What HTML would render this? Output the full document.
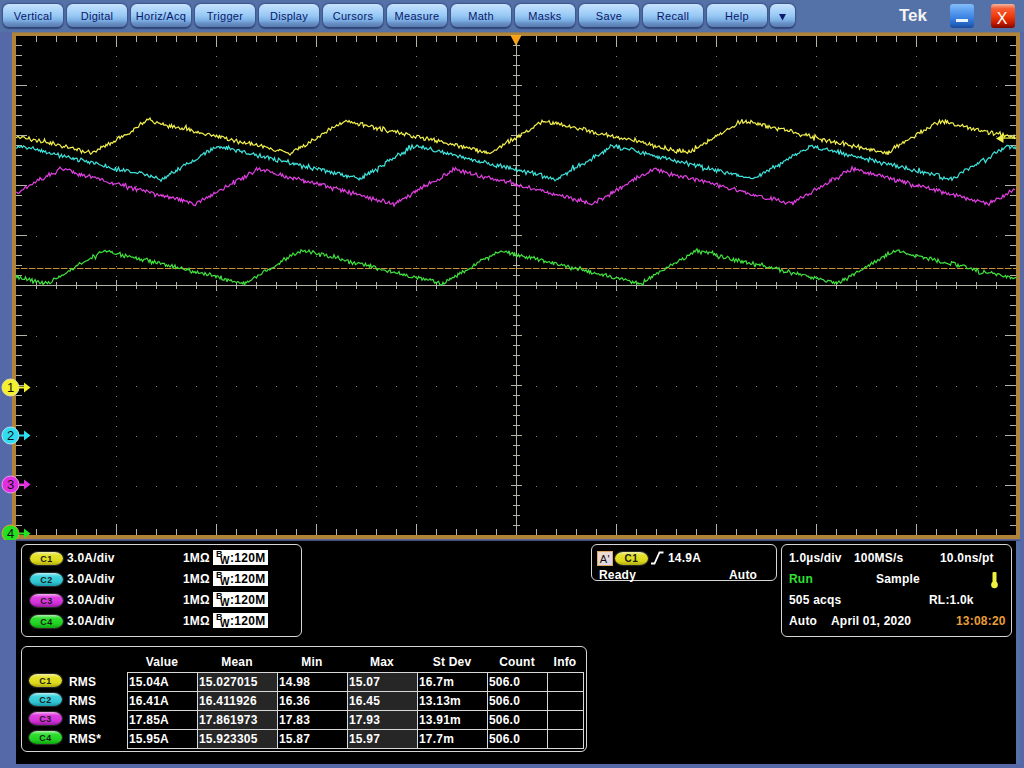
<!DOCTYPE html>
<html><head><meta charset="utf-8">
<style>
*{margin:0;padding:0;box-sizing:border-box}
html,body{width:1024px;height:768px;overflow:hidden}
body{background:#5472a8;position:relative;font-family:"Liberation Sans",sans-serif;color:#fff}
.a{position:absolute}
.btn{position:absolute;top:4px;height:23px;width:60px;border-radius:6px;
 background:linear-gradient(#c9e2fd 0%,#b4d8fb 20%,#98c9f5 50%,#7eb2e6 70%,#6890c6 84%,#5a7aac 100%);
 box-shadow:0 0 1.5px 0.5px rgba(40,60,110,.55),0 2px 1px rgba(45,65,115,.8);
 color:#0a186a;font-size:11px;letter-spacing:0.3px;text-align:center;line-height:25px}
.tek{left:899px;top:6px;font-size:17px;font-weight:bold;color:#f4f4f4}
.win{position:absolute;top:4px;width:24px;height:24px;border-radius:3px}
.frame{left:12px;top:32px;width:1008px;height:507px;background:#b08438;border-top:1px solid #8e7a62}
.scr{left:16px;top:36px;width:1000px;height:499px;background:#000}
.panel{left:16px;top:541px;width:1000px;height:223px;background:#000}
.box{position:absolute;border:1.5px solid #d6d6d6;border-radius:6px}
.t{position:absolute;font-size:12px;font-weight:bold;white-space:nowrap;line-height:14px;padding-top:1px;letter-spacing:0.2px}
.pill{position:absolute;width:33px;height:13px;border-radius:8px/6.5px;color:#1a1a1a;font-size:9px;text-align:center;line-height:14px;font-weight:bold;letter-spacing:0.5px;box-shadow:0 0 1px 1px rgba(90,90,90,.5)}
.p1{background:linear-gradient(#f0eea8 0%,#e4e22a 25%,#dcd81c 70%,#b0aa10 100%)}
.p2{background:linear-gradient(#b8eef4 0%,#40d4e0 25%,#30c4d2 70%,#1898a8 100%)}
.p3{background:linear-gradient(#f0b0f0 0%,#e040e0 25%,#d030d8 70%,#9818a0 100%)}
.p4{background:linear-gradient(#b0f0b0 0%,#30e030 25%,#20d020 70%,#10a010 100%)}
.bw{position:absolute;left:213px;width:55px;height:15px;background:#fff;color:#000;font-size:12px;font-weight:bold;line-height:15px}
.cm{position:absolute;left:2px;width:17px;height:17px;border-radius:50%;color:#111;font-size:13px;text-align:center;line-height:17px}
</style></head><body>
<div class="btn" style="left:3px">Vertical</div>
<div class="btn" style="left:67px">Digital</div>
<div class="btn" style="left:131px">Horiz/Acq</div>
<div class="btn" style="left:195px">Trigger</div>
<div class="btn" style="left:259px">Display</div>
<div class="btn" style="left:323px">Cursors</div>
<div class="btn" style="left:387px">Measure</div>
<div class="btn" style="left:451px">Math</div>
<div class="btn" style="left:515px">Masks</div>
<div class="btn" style="left:579px">Save</div>
<div class="btn" style="left:643px">Recall</div>
<div class="btn" style="left:707px">Help</div>
<div class="btn" style="left:770px;width:25px"><svg width="25" height="21" style="position:absolute;left:0;top:0"><path d="M9 10h7l-3.5 6.5z" fill="#0c1a70"/></svg></div>
<div class="a tek">Tek</div>
<div class="win" style="left:950px;background:linear-gradient(#84bcfa 0%,#5a9ef0 30%,#3a80e0 60%,#2262c2 85%,#1a4a9a 100%)"><div class="a" style="left:5.5px;top:15px;width:12px;height:2.5px;background:#eaf4ff"></div></div>
<div class="win" style="left:991px;background:linear-gradient(#f4b8a4 0%,#f86038 18%,#f23c0a 50%,#c41a00 80%,#7a0800 100%)"><div class="a" style="left:-1px;top:5px;width:24px;text-align:center;font-size:16px;color:#fff;line-height:19px">X</div></div>

<div class="a" style="left:0;top:32px;width:16px;height:736px;background:#5568a8"></div>
<div class="a" style="left:1020px;top:32px;width:4px;height:736px;background:#5568a8"></div>
<div class="a" style="left:0;top:764px;width:1024px;height:4px;background:#5568a8"></div>
<div class="a frame"></div>
<div class="a scr"></div>
<svg class="a" style="left:0;top:0" width="1024" height="540" viewBox="0 0 1024 540">
<path fill="#84847a" d="M116 46h1v1h-1zM116 56h1v1h-1zM116 66h1v1h-1zM116 76h1v1h-1zM116 86h1v1h-1zM116 96h1v1h-1zM116 106h1v1h-1zM116 116h1v1h-1zM116 126h1v1h-1zM116 136h1v1h-1zM116 146h1v1h-1zM116 156h1v1h-1zM116 166h1v1h-1zM116 176h1v1h-1zM116 186h1v1h-1zM116 196h1v1h-1zM116 206h1v1h-1zM116 216h1v1h-1zM116 226h1v1h-1zM116 236h1v1h-1zM116 246h1v1h-1zM116 256h1v1h-1zM116 266h1v1h-1zM116 276h1v1h-1zM116 286h1v1h-1zM116 296h1v1h-1zM116 306h1v1h-1zM116 316h1v1h-1zM116 326h1v1h-1zM116 336h1v1h-1zM116 346h1v1h-1zM116 356h1v1h-1zM116 366h1v1h-1zM116 376h1v1h-1zM116 386h1v1h-1zM116 396h1v1h-1zM116 406h1v1h-1zM116 416h1v1h-1zM116 426h1v1h-1zM116 436h1v1h-1zM116 446h1v1h-1zM116 456h1v1h-1zM116 466h1v1h-1zM116 476h1v1h-1zM116 486h1v1h-1zM116 496h1v1h-1zM116 506h1v1h-1zM116 516h1v1h-1zM116 526h1v1h-1zM216 46h1v1h-1zM216 56h1v1h-1zM216 66h1v1h-1zM216 76h1v1h-1zM216 86h1v1h-1zM216 96h1v1h-1zM216 106h1v1h-1zM216 116h1v1h-1zM216 126h1v1h-1zM216 136h1v1h-1zM216 146h1v1h-1zM216 156h1v1h-1zM216 166h1v1h-1zM216 176h1v1h-1zM216 186h1v1h-1zM216 196h1v1h-1zM216 206h1v1h-1zM216 216h1v1h-1zM216 226h1v1h-1zM216 236h1v1h-1zM216 246h1v1h-1zM216 256h1v1h-1zM216 266h1v1h-1zM216 276h1v1h-1zM216 286h1v1h-1zM216 296h1v1h-1zM216 306h1v1h-1zM216 316h1v1h-1zM216 326h1v1h-1zM216 336h1v1h-1zM216 346h1v1h-1zM216 356h1v1h-1zM216 366h1v1h-1zM216 376h1v1h-1zM216 386h1v1h-1zM216 396h1v1h-1zM216 406h1v1h-1zM216 416h1v1h-1zM216 426h1v1h-1zM216 436h1v1h-1zM216 446h1v1h-1zM216 456h1v1h-1zM216 466h1v1h-1zM216 476h1v1h-1zM216 486h1v1h-1zM216 496h1v1h-1zM216 506h1v1h-1zM216 516h1v1h-1zM216 526h1v1h-1zM316 46h1v1h-1zM316 56h1v1h-1zM316 66h1v1h-1zM316 76h1v1h-1zM316 86h1v1h-1zM316 96h1v1h-1zM316 106h1v1h-1zM316 116h1v1h-1zM316 126h1v1h-1zM316 136h1v1h-1zM316 146h1v1h-1zM316 156h1v1h-1zM316 166h1v1h-1zM316 176h1v1h-1zM316 186h1v1h-1zM316 196h1v1h-1zM316 206h1v1h-1zM316 216h1v1h-1zM316 226h1v1h-1zM316 236h1v1h-1zM316 246h1v1h-1zM316 256h1v1h-1zM316 266h1v1h-1zM316 276h1v1h-1zM316 286h1v1h-1zM316 296h1v1h-1zM316 306h1v1h-1zM316 316h1v1h-1zM316 326h1v1h-1zM316 336h1v1h-1zM316 346h1v1h-1zM316 356h1v1h-1zM316 366h1v1h-1zM316 376h1v1h-1zM316 386h1v1h-1zM316 396h1v1h-1zM316 406h1v1h-1zM316 416h1v1h-1zM316 426h1v1h-1zM316 436h1v1h-1zM316 446h1v1h-1zM316 456h1v1h-1zM316 466h1v1h-1zM316 476h1v1h-1zM316 486h1v1h-1zM316 496h1v1h-1zM316 506h1v1h-1zM316 516h1v1h-1zM316 526h1v1h-1zM416 46h1v1h-1zM416 56h1v1h-1zM416 66h1v1h-1zM416 76h1v1h-1zM416 86h1v1h-1zM416 96h1v1h-1zM416 106h1v1h-1zM416 116h1v1h-1zM416 126h1v1h-1zM416 136h1v1h-1zM416 146h1v1h-1zM416 156h1v1h-1zM416 166h1v1h-1zM416 176h1v1h-1zM416 186h1v1h-1zM416 196h1v1h-1zM416 206h1v1h-1zM416 216h1v1h-1zM416 226h1v1h-1zM416 236h1v1h-1zM416 246h1v1h-1zM416 256h1v1h-1zM416 266h1v1h-1zM416 276h1v1h-1zM416 286h1v1h-1zM416 296h1v1h-1zM416 306h1v1h-1zM416 316h1v1h-1zM416 326h1v1h-1zM416 336h1v1h-1zM416 346h1v1h-1zM416 356h1v1h-1zM416 366h1v1h-1zM416 376h1v1h-1zM416 386h1v1h-1zM416 396h1v1h-1zM416 406h1v1h-1zM416 416h1v1h-1zM416 426h1v1h-1zM416 436h1v1h-1zM416 446h1v1h-1zM416 456h1v1h-1zM416 466h1v1h-1zM416 476h1v1h-1zM416 486h1v1h-1zM416 496h1v1h-1zM416 506h1v1h-1zM416 516h1v1h-1zM416 526h1v1h-1zM516 46h1v1h-1zM516 56h1v1h-1zM516 66h1v1h-1zM516 76h1v1h-1zM516 86h1v1h-1zM516 96h1v1h-1zM516 106h1v1h-1zM516 116h1v1h-1zM516 126h1v1h-1zM516 136h1v1h-1zM516 146h1v1h-1zM516 156h1v1h-1zM516 166h1v1h-1zM516 176h1v1h-1zM516 186h1v1h-1zM516 196h1v1h-1zM516 206h1v1h-1zM516 216h1v1h-1zM516 226h1v1h-1zM516 236h1v1h-1zM516 246h1v1h-1zM516 256h1v1h-1zM516 266h1v1h-1zM516 276h1v1h-1zM516 286h1v1h-1zM516 296h1v1h-1zM516 306h1v1h-1zM516 316h1v1h-1zM516 326h1v1h-1zM516 336h1v1h-1zM516 346h1v1h-1zM516 356h1v1h-1zM516 366h1v1h-1zM516 376h1v1h-1zM516 386h1v1h-1zM516 396h1v1h-1zM516 406h1v1h-1zM516 416h1v1h-1zM516 426h1v1h-1zM516 436h1v1h-1zM516 446h1v1h-1zM516 456h1v1h-1zM516 466h1v1h-1zM516 476h1v1h-1zM516 486h1v1h-1zM516 496h1v1h-1zM516 506h1v1h-1zM516 516h1v1h-1zM516 526h1v1h-1zM616 46h1v1h-1zM616 56h1v1h-1zM616 66h1v1h-1zM616 76h1v1h-1zM616 86h1v1h-1zM616 96h1v1h-1zM616 106h1v1h-1zM616 116h1v1h-1zM616 126h1v1h-1zM616 136h1v1h-1zM616 146h1v1h-1zM616 156h1v1h-1zM616 166h1v1h-1zM616 176h1v1h-1zM616 186h1v1h-1zM616 196h1v1h-1zM616 206h1v1h-1zM616 216h1v1h-1zM616 226h1v1h-1zM616 236h1v1h-1zM616 246h1v1h-1zM616 256h1v1h-1zM616 266h1v1h-1zM616 276h1v1h-1zM616 286h1v1h-1zM616 296h1v1h-1zM616 306h1v1h-1zM616 316h1v1h-1zM616 326h1v1h-1zM616 336h1v1h-1zM616 346h1v1h-1zM616 356h1v1h-1zM616 366h1v1h-1zM616 376h1v1h-1zM616 386h1v1h-1zM616 396h1v1h-1zM616 406h1v1h-1zM616 416h1v1h-1zM616 426h1v1h-1zM616 436h1v1h-1zM616 446h1v1h-1zM616 456h1v1h-1zM616 466h1v1h-1zM616 476h1v1h-1zM616 486h1v1h-1zM616 496h1v1h-1zM616 506h1v1h-1zM616 516h1v1h-1zM616 526h1v1h-1zM716 46h1v1h-1zM716 56h1v1h-1zM716 66h1v1h-1zM716 76h1v1h-1zM716 86h1v1h-1zM716 96h1v1h-1zM716 106h1v1h-1zM716 116h1v1h-1zM716 126h1v1h-1zM716 136h1v1h-1zM716 146h1v1h-1zM716 156h1v1h-1zM716 166h1v1h-1zM716 176h1v1h-1zM716 186h1v1h-1zM716 196h1v1h-1zM716 206h1v1h-1zM716 216h1v1h-1zM716 226h1v1h-1zM716 236h1v1h-1zM716 246h1v1h-1zM716 256h1v1h-1zM716 266h1v1h-1zM716 276h1v1h-1zM716 286h1v1h-1zM716 296h1v1h-1zM716 306h1v1h-1zM716 316h1v1h-1zM716 326h1v1h-1zM716 336h1v1h-1zM716 346h1v1h-1zM716 356h1v1h-1zM716 366h1v1h-1zM716 376h1v1h-1zM716 386h1v1h-1zM716 396h1v1h-1zM716 406h1v1h-1zM716 416h1v1h-1zM716 426h1v1h-1zM716 436h1v1h-1zM716 446h1v1h-1zM716 456h1v1h-1zM716 466h1v1h-1zM716 476h1v1h-1zM716 486h1v1h-1zM716 496h1v1h-1zM716 506h1v1h-1zM716 516h1v1h-1zM716 526h1v1h-1zM816 46h1v1h-1zM816 56h1v1h-1zM816 66h1v1h-1zM816 76h1v1h-1zM816 86h1v1h-1zM816 96h1v1h-1zM816 106h1v1h-1zM816 116h1v1h-1zM816 126h1v1h-1zM816 136h1v1h-1zM816 146h1v1h-1zM816 156h1v1h-1zM816 166h1v1h-1zM816 176h1v1h-1zM816 186h1v1h-1zM816 196h1v1h-1zM816 206h1v1h-1zM816 216h1v1h-1zM816 226h1v1h-1zM816 236h1v1h-1zM816 246h1v1h-1zM816 256h1v1h-1zM816 266h1v1h-1zM816 276h1v1h-1zM816 286h1v1h-1zM816 296h1v1h-1zM816 306h1v1h-1zM816 316h1v1h-1zM816 326h1v1h-1zM816 336h1v1h-1zM816 346h1v1h-1zM816 356h1v1h-1zM816 366h1v1h-1zM816 376h1v1h-1zM816 386h1v1h-1zM816 396h1v1h-1zM816 406h1v1h-1zM816 416h1v1h-1zM816 426h1v1h-1zM816 436h1v1h-1zM816 446h1v1h-1zM816 456h1v1h-1zM816 466h1v1h-1zM816 476h1v1h-1zM816 486h1v1h-1zM816 496h1v1h-1zM816 506h1v1h-1zM816 516h1v1h-1zM816 526h1v1h-1zM916 46h1v1h-1zM916 56h1v1h-1zM916 66h1v1h-1zM916 76h1v1h-1zM916 86h1v1h-1zM916 96h1v1h-1zM916 106h1v1h-1zM916 116h1v1h-1zM916 126h1v1h-1zM916 136h1v1h-1zM916 146h1v1h-1zM916 156h1v1h-1zM916 166h1v1h-1zM916 176h1v1h-1zM916 186h1v1h-1zM916 196h1v1h-1zM916 206h1v1h-1zM916 216h1v1h-1zM916 226h1v1h-1zM916 236h1v1h-1zM916 246h1v1h-1zM916 256h1v1h-1zM916 266h1v1h-1zM916 276h1v1h-1zM916 286h1v1h-1zM916 296h1v1h-1zM916 306h1v1h-1zM916 316h1v1h-1zM916 326h1v1h-1zM916 336h1v1h-1zM916 346h1v1h-1zM916 356h1v1h-1zM916 366h1v1h-1zM916 376h1v1h-1zM916 386h1v1h-1zM916 396h1v1h-1zM916 406h1v1h-1zM916 416h1v1h-1zM916 426h1v1h-1zM916 436h1v1h-1zM916 446h1v1h-1zM916 456h1v1h-1zM916 466h1v1h-1zM916 476h1v1h-1zM916 486h1v1h-1zM916 496h1v1h-1zM916 506h1v1h-1zM916 516h1v1h-1zM916 526h1v1h-1zM36 86h1v1h-1zM56 86h1v1h-1zM76 86h1v1h-1zM96 86h1v1h-1zM116 86h1v1h-1zM136 86h1v1h-1zM156 86h1v1h-1zM176 86h1v1h-1zM196 86h1v1h-1zM216 86h1v1h-1zM236 86h1v1h-1zM256 86h1v1h-1zM276 86h1v1h-1zM296 86h1v1h-1zM316 86h1v1h-1zM336 86h1v1h-1zM356 86h1v1h-1zM376 86h1v1h-1zM396 86h1v1h-1zM416 86h1v1h-1zM436 86h1v1h-1zM456 86h1v1h-1zM476 86h1v1h-1zM496 86h1v1h-1zM516 86h1v1h-1zM536 86h1v1h-1zM556 86h1v1h-1zM576 86h1v1h-1zM596 86h1v1h-1zM616 86h1v1h-1zM636 86h1v1h-1zM656 86h1v1h-1zM676 86h1v1h-1zM696 86h1v1h-1zM716 86h1v1h-1zM736 86h1v1h-1zM756 86h1v1h-1zM776 86h1v1h-1zM796 86h1v1h-1zM816 86h1v1h-1zM836 86h1v1h-1zM856 86h1v1h-1zM876 86h1v1h-1zM896 86h1v1h-1zM916 86h1v1h-1zM936 86h1v1h-1zM956 86h1v1h-1zM976 86h1v1h-1zM996 86h1v1h-1zM36 136h1v1h-1zM56 136h1v1h-1zM76 136h1v1h-1zM96 136h1v1h-1zM116 136h1v1h-1zM136 136h1v1h-1zM156 136h1v1h-1zM176 136h1v1h-1zM196 136h1v1h-1zM216 136h1v1h-1zM236 136h1v1h-1zM256 136h1v1h-1zM276 136h1v1h-1zM296 136h1v1h-1zM316 136h1v1h-1zM336 136h1v1h-1zM356 136h1v1h-1zM376 136h1v1h-1zM396 136h1v1h-1zM416 136h1v1h-1zM436 136h1v1h-1zM456 136h1v1h-1zM476 136h1v1h-1zM496 136h1v1h-1zM516 136h1v1h-1zM536 136h1v1h-1zM556 136h1v1h-1zM576 136h1v1h-1zM596 136h1v1h-1zM616 136h1v1h-1zM636 136h1v1h-1zM656 136h1v1h-1zM676 136h1v1h-1zM696 136h1v1h-1zM716 136h1v1h-1zM736 136h1v1h-1zM756 136h1v1h-1zM776 136h1v1h-1zM796 136h1v1h-1zM816 136h1v1h-1zM836 136h1v1h-1zM856 136h1v1h-1zM876 136h1v1h-1zM896 136h1v1h-1zM916 136h1v1h-1zM936 136h1v1h-1zM956 136h1v1h-1zM976 136h1v1h-1zM996 136h1v1h-1zM36 186h1v1h-1zM56 186h1v1h-1zM76 186h1v1h-1zM96 186h1v1h-1zM116 186h1v1h-1zM136 186h1v1h-1zM156 186h1v1h-1zM176 186h1v1h-1zM196 186h1v1h-1zM216 186h1v1h-1zM236 186h1v1h-1zM256 186h1v1h-1zM276 186h1v1h-1zM296 186h1v1h-1zM316 186h1v1h-1zM336 186h1v1h-1zM356 186h1v1h-1zM376 186h1v1h-1zM396 186h1v1h-1zM416 186h1v1h-1zM436 186h1v1h-1zM456 186h1v1h-1zM476 186h1v1h-1zM496 186h1v1h-1zM516 186h1v1h-1zM536 186h1v1h-1zM556 186h1v1h-1zM576 186h1v1h-1zM596 186h1v1h-1zM616 186h1v1h-1zM636 186h1v1h-1zM656 186h1v1h-1zM676 186h1v1h-1zM696 186h1v1h-1zM716 186h1v1h-1zM736 186h1v1h-1zM756 186h1v1h-1zM776 186h1v1h-1zM796 186h1v1h-1zM816 186h1v1h-1zM836 186h1v1h-1zM856 186h1v1h-1zM876 186h1v1h-1zM896 186h1v1h-1zM916 186h1v1h-1zM936 186h1v1h-1zM956 186h1v1h-1zM976 186h1v1h-1zM996 186h1v1h-1zM36 236h1v1h-1zM56 236h1v1h-1zM76 236h1v1h-1zM96 236h1v1h-1zM116 236h1v1h-1zM136 236h1v1h-1zM156 236h1v1h-1zM176 236h1v1h-1zM196 236h1v1h-1zM216 236h1v1h-1zM236 236h1v1h-1zM256 236h1v1h-1zM276 236h1v1h-1zM296 236h1v1h-1zM316 236h1v1h-1zM336 236h1v1h-1zM356 236h1v1h-1zM376 236h1v1h-1zM396 236h1v1h-1zM416 236h1v1h-1zM436 236h1v1h-1zM456 236h1v1h-1zM476 236h1v1h-1zM496 236h1v1h-1zM516 236h1v1h-1zM536 236h1v1h-1zM556 236h1v1h-1zM576 236h1v1h-1zM596 236h1v1h-1zM616 236h1v1h-1zM636 236h1v1h-1zM656 236h1v1h-1zM676 236h1v1h-1zM696 236h1v1h-1zM716 236h1v1h-1zM736 236h1v1h-1zM756 236h1v1h-1zM776 236h1v1h-1zM796 236h1v1h-1zM816 236h1v1h-1zM836 236h1v1h-1zM856 236h1v1h-1zM876 236h1v1h-1zM896 236h1v1h-1zM916 236h1v1h-1zM936 236h1v1h-1zM956 236h1v1h-1zM976 236h1v1h-1zM996 236h1v1h-1zM36 336h1v1h-1zM56 336h1v1h-1zM76 336h1v1h-1zM96 336h1v1h-1zM116 336h1v1h-1zM136 336h1v1h-1zM156 336h1v1h-1zM176 336h1v1h-1zM196 336h1v1h-1zM216 336h1v1h-1zM236 336h1v1h-1zM256 336h1v1h-1zM276 336h1v1h-1zM296 336h1v1h-1zM316 336h1v1h-1zM336 336h1v1h-1zM356 336h1v1h-1zM376 336h1v1h-1zM396 336h1v1h-1zM416 336h1v1h-1zM436 336h1v1h-1zM456 336h1v1h-1zM476 336h1v1h-1zM496 336h1v1h-1zM516 336h1v1h-1zM536 336h1v1h-1zM556 336h1v1h-1zM576 336h1v1h-1zM596 336h1v1h-1zM616 336h1v1h-1zM636 336h1v1h-1zM656 336h1v1h-1zM676 336h1v1h-1zM696 336h1v1h-1zM716 336h1v1h-1zM736 336h1v1h-1zM756 336h1v1h-1zM776 336h1v1h-1zM796 336h1v1h-1zM816 336h1v1h-1zM836 336h1v1h-1zM856 336h1v1h-1zM876 336h1v1h-1zM896 336h1v1h-1zM916 336h1v1h-1zM936 336h1v1h-1zM956 336h1v1h-1zM976 336h1v1h-1zM996 336h1v1h-1zM36 386h1v1h-1zM56 386h1v1h-1zM76 386h1v1h-1zM96 386h1v1h-1zM116 386h1v1h-1zM136 386h1v1h-1zM156 386h1v1h-1zM176 386h1v1h-1zM196 386h1v1h-1zM216 386h1v1h-1zM236 386h1v1h-1zM256 386h1v1h-1zM276 386h1v1h-1zM296 386h1v1h-1zM316 386h1v1h-1zM336 386h1v1h-1zM356 386h1v1h-1zM376 386h1v1h-1zM396 386h1v1h-1zM416 386h1v1h-1zM436 386h1v1h-1zM456 386h1v1h-1zM476 386h1v1h-1zM496 386h1v1h-1zM516 386h1v1h-1zM536 386h1v1h-1zM556 386h1v1h-1zM576 386h1v1h-1zM596 386h1v1h-1zM616 386h1v1h-1zM636 386h1v1h-1zM656 386h1v1h-1zM676 386h1v1h-1zM696 386h1v1h-1zM716 386h1v1h-1zM736 386h1v1h-1zM756 386h1v1h-1zM776 386h1v1h-1zM796 386h1v1h-1zM816 386h1v1h-1zM836 386h1v1h-1zM856 386h1v1h-1zM876 386h1v1h-1zM896 386h1v1h-1zM916 386h1v1h-1zM936 386h1v1h-1zM956 386h1v1h-1zM976 386h1v1h-1zM996 386h1v1h-1zM36 436h1v1h-1zM56 436h1v1h-1zM76 436h1v1h-1zM96 436h1v1h-1zM116 436h1v1h-1zM136 436h1v1h-1zM156 436h1v1h-1zM176 436h1v1h-1zM196 436h1v1h-1zM216 436h1v1h-1zM236 436h1v1h-1zM256 436h1v1h-1zM276 436h1v1h-1zM296 436h1v1h-1zM316 436h1v1h-1zM336 436h1v1h-1zM356 436h1v1h-1zM376 436h1v1h-1zM396 436h1v1h-1zM416 436h1v1h-1zM436 436h1v1h-1zM456 436h1v1h-1zM476 436h1v1h-1zM496 436h1v1h-1zM516 436h1v1h-1zM536 436h1v1h-1zM556 436h1v1h-1zM576 436h1v1h-1zM596 436h1v1h-1zM616 436h1v1h-1zM636 436h1v1h-1zM656 436h1v1h-1zM676 436h1v1h-1zM696 436h1v1h-1zM716 436h1v1h-1zM736 436h1v1h-1zM756 436h1v1h-1zM776 436h1v1h-1zM796 436h1v1h-1zM816 436h1v1h-1zM836 436h1v1h-1zM856 436h1v1h-1zM876 436h1v1h-1zM896 436h1v1h-1zM916 436h1v1h-1zM936 436h1v1h-1zM956 436h1v1h-1zM976 436h1v1h-1zM996 436h1v1h-1zM36 486h1v1h-1zM56 486h1v1h-1zM76 486h1v1h-1zM96 486h1v1h-1zM116 486h1v1h-1zM136 486h1v1h-1zM156 486h1v1h-1zM176 486h1v1h-1zM196 486h1v1h-1zM216 486h1v1h-1zM236 486h1v1h-1zM256 486h1v1h-1zM276 486h1v1h-1zM296 486h1v1h-1zM316 486h1v1h-1zM336 486h1v1h-1zM356 486h1v1h-1zM376 486h1v1h-1zM396 486h1v1h-1zM416 486h1v1h-1zM436 486h1v1h-1zM456 486h1v1h-1zM476 486h1v1h-1zM496 486h1v1h-1zM516 486h1v1h-1zM536 486h1v1h-1zM556 486h1v1h-1zM576 486h1v1h-1zM596 486h1v1h-1zM616 486h1v1h-1zM636 486h1v1h-1zM656 486h1v1h-1zM676 486h1v1h-1zM696 486h1v1h-1zM716 486h1v1h-1zM736 486h1v1h-1zM756 486h1v1h-1zM776 486h1v1h-1zM796 486h1v1h-1zM816 486h1v1h-1zM836 486h1v1h-1zM856 486h1v1h-1zM876 486h1v1h-1zM896 486h1v1h-1zM916 486h1v1h-1zM936 486h1v1h-1zM956 486h1v1h-1zM976 486h1v1h-1zM996 486h1v1h-1z"/>
<path fill="#b4b4a6" d="M36 36h1v6h-1zM36 529h1v6h-1zM36 282h1v7h-1zM56 36h1v6h-1zM56 529h1v6h-1zM56 282h1v7h-1zM76 36h1v6h-1zM76 529h1v6h-1zM76 282h1v7h-1zM96 36h1v6h-1zM96 529h1v6h-1zM96 282h1v7h-1zM116 36h1v11h-1zM116 524h1v11h-1zM116 280h1v11h-1zM136 36h1v6h-1zM136 529h1v6h-1zM136 282h1v7h-1zM156 36h1v6h-1zM156 529h1v6h-1zM156 282h1v7h-1zM176 36h1v6h-1zM176 529h1v6h-1zM176 282h1v7h-1zM196 36h1v6h-1zM196 529h1v6h-1zM196 282h1v7h-1zM216 36h1v11h-1zM216 524h1v11h-1zM216 280h1v11h-1zM236 36h1v6h-1zM236 529h1v6h-1zM236 282h1v7h-1zM256 36h1v6h-1zM256 529h1v6h-1zM256 282h1v7h-1zM276 36h1v6h-1zM276 529h1v6h-1zM276 282h1v7h-1zM296 36h1v6h-1zM296 529h1v6h-1zM296 282h1v7h-1zM316 36h1v11h-1zM316 524h1v11h-1zM316 280h1v11h-1zM336 36h1v6h-1zM336 529h1v6h-1zM336 282h1v7h-1zM356 36h1v6h-1zM356 529h1v6h-1zM356 282h1v7h-1zM376 36h1v6h-1zM376 529h1v6h-1zM376 282h1v7h-1zM396 36h1v6h-1zM396 529h1v6h-1zM396 282h1v7h-1zM416 36h1v11h-1zM416 524h1v11h-1zM416 280h1v11h-1zM436 36h1v6h-1zM436 529h1v6h-1zM436 282h1v7h-1zM456 36h1v6h-1zM456 529h1v6h-1zM456 282h1v7h-1zM476 36h1v6h-1zM476 529h1v6h-1zM476 282h1v7h-1zM496 36h1v6h-1zM496 529h1v6h-1zM496 282h1v7h-1zM516 36h1v11h-1zM516 524h1v11h-1zM516 280h1v11h-1zM536 36h1v6h-1zM536 529h1v6h-1zM536 282h1v7h-1zM556 36h1v6h-1zM556 529h1v6h-1zM556 282h1v7h-1zM576 36h1v6h-1zM576 529h1v6h-1zM576 282h1v7h-1zM596 36h1v6h-1zM596 529h1v6h-1zM596 282h1v7h-1zM616 36h1v11h-1zM616 524h1v11h-1zM616 280h1v11h-1zM636 36h1v6h-1zM636 529h1v6h-1zM636 282h1v7h-1zM656 36h1v6h-1zM656 529h1v6h-1zM656 282h1v7h-1zM676 36h1v6h-1zM676 529h1v6h-1zM676 282h1v7h-1zM696 36h1v6h-1zM696 529h1v6h-1zM696 282h1v7h-1zM716 36h1v11h-1zM716 524h1v11h-1zM716 280h1v11h-1zM736 36h1v6h-1zM736 529h1v6h-1zM736 282h1v7h-1zM756 36h1v6h-1zM756 529h1v6h-1zM756 282h1v7h-1zM776 36h1v6h-1zM776 529h1v6h-1zM776 282h1v7h-1zM796 36h1v6h-1zM796 529h1v6h-1zM796 282h1v7h-1zM816 36h1v11h-1zM816 524h1v11h-1zM816 280h1v11h-1zM836 36h1v6h-1zM836 529h1v6h-1zM836 282h1v7h-1zM856 36h1v6h-1zM856 529h1v6h-1zM856 282h1v7h-1zM876 36h1v6h-1zM876 529h1v6h-1zM876 282h1v7h-1zM896 36h1v6h-1zM896 529h1v6h-1zM896 282h1v7h-1zM916 36h1v11h-1zM916 524h1v11h-1zM916 280h1v11h-1zM936 36h1v6h-1zM936 529h1v6h-1zM936 282h1v7h-1zM956 36h1v6h-1zM956 529h1v6h-1zM956 282h1v7h-1zM976 36h1v6h-1zM976 529h1v6h-1zM976 282h1v7h-1zM996 36h1v6h-1zM996 529h1v6h-1zM996 282h1v7h-1zM16 45h6v1h-6zM1010 45h6v1h-6zM513 45h7v1h-7zM16 55h6v1h-6zM1010 55h6v1h-6zM513 55h7v1h-7zM16 65h6v1h-6zM1010 65h6v1h-6zM513 65h7v1h-7zM16 75h6v1h-6zM1010 75h6v1h-6zM513 75h7v1h-7zM16 85h11v1h-11zM1005 85h11v1h-11zM511 85h11v1h-11zM16 95h6v1h-6zM1010 95h6v1h-6zM513 95h7v1h-7zM16 105h6v1h-6zM1010 105h6v1h-6zM513 105h7v1h-7zM16 115h6v1h-6zM1010 115h6v1h-6zM513 115h7v1h-7zM16 125h6v1h-6zM1010 125h6v1h-6zM513 125h7v1h-7zM16 135h11v1h-11zM1005 135h11v1h-11zM511 135h11v1h-11zM16 145h6v1h-6zM1010 145h6v1h-6zM513 145h7v1h-7zM16 155h6v1h-6zM1010 155h6v1h-6zM513 155h7v1h-7zM16 165h6v1h-6zM1010 165h6v1h-6zM513 165h7v1h-7zM16 175h6v1h-6zM1010 175h6v1h-6zM513 175h7v1h-7zM16 185h11v1h-11zM1005 185h11v1h-11zM511 185h11v1h-11zM16 195h6v1h-6zM1010 195h6v1h-6zM513 195h7v1h-7zM16 205h6v1h-6zM1010 205h6v1h-6zM513 205h7v1h-7zM16 215h6v1h-6zM1010 215h6v1h-6zM513 215h7v1h-7zM16 225h6v1h-6zM1010 225h6v1h-6zM513 225h7v1h-7zM16 235h11v1h-11zM1005 235h11v1h-11zM511 235h11v1h-11zM16 245h6v1h-6zM1010 245h6v1h-6zM513 245h7v1h-7zM16 255h6v1h-6zM1010 255h6v1h-6zM513 255h7v1h-7zM16 265h6v1h-6zM1010 265h6v1h-6zM513 265h7v1h-7zM16 275h6v1h-6zM1010 275h6v1h-6zM513 275h7v1h-7zM16 285h11v1h-11zM1005 285h11v1h-11zM511 285h11v1h-11zM16 295h6v1h-6zM1010 295h6v1h-6zM513 295h7v1h-7zM16 305h6v1h-6zM1010 305h6v1h-6zM513 305h7v1h-7zM16 315h6v1h-6zM1010 315h6v1h-6zM513 315h7v1h-7zM16 325h6v1h-6zM1010 325h6v1h-6zM513 325h7v1h-7zM16 335h11v1h-11zM1005 335h11v1h-11zM511 335h11v1h-11zM16 345h6v1h-6zM1010 345h6v1h-6zM513 345h7v1h-7zM16 355h6v1h-6zM1010 355h6v1h-6zM513 355h7v1h-7zM16 365h6v1h-6zM1010 365h6v1h-6zM513 365h7v1h-7zM16 375h6v1h-6zM1010 375h6v1h-6zM513 375h7v1h-7zM16 385h11v1h-11zM1005 385h11v1h-11zM511 385h11v1h-11zM16 395h6v1h-6zM1010 395h6v1h-6zM513 395h7v1h-7zM16 405h6v1h-6zM1010 405h6v1h-6zM513 405h7v1h-7zM16 415h6v1h-6zM1010 415h6v1h-6zM513 415h7v1h-7zM16 425h6v1h-6zM1010 425h6v1h-6zM513 425h7v1h-7zM16 435h11v1h-11zM1005 435h11v1h-11zM511 435h11v1h-11zM16 445h6v1h-6zM1010 445h6v1h-6zM513 445h7v1h-7zM16 455h6v1h-6zM1010 455h6v1h-6zM513 455h7v1h-7zM16 465h6v1h-6zM1010 465h6v1h-6zM513 465h7v1h-7zM16 475h6v1h-6zM1010 475h6v1h-6zM513 475h7v1h-7zM16 485h11v1h-11zM1005 485h11v1h-11zM511 485h11v1h-11zM16 495h6v1h-6zM1010 495h6v1h-6zM513 495h7v1h-7zM16 505h6v1h-6zM1010 505h6v1h-6zM513 505h7v1h-7zM16 515h6v1h-6zM1010 515h6v1h-6zM513 515h7v1h-7zM16 525h6v1h-6zM1010 525h6v1h-6zM513 525h7v1h-7zM16 285h1000v1h-1000zM516 36h1v499h-1z"/>
<line x1="16" y1="268.5" x2="1016" y2="268.5" stroke="#d09438" stroke-width="1" stroke-dasharray="6.5 1.5" stroke-dashoffset="3"/>
<path d="M16.0 137.9 L18.0 136.3 L20.0 138.5 L21.0 137.7 L22.0 136.6 L24.0 136.9 L26.0 138.9 L28.0 138.8 L29.0 136.9 L30.5 140.2 L31.5 141.4 L33.5 139.1 L35.5 139.7 L37.0 142.2 L39.0 139.2 L41.0 142.8 L42.0 142.4 L43.5 141.7 L44.5 139.0 L45.5 141.6 L46.5 142.8 L47.5 142.6 L48.5 143.0 L49.5 144.3 L50.5 141.5 L51.5 145.4 L53.0 141.6 L55.0 144.9 L56.0 145.7 L58.0 143.9 L60.0 144.9 L62.0 147.9 L63.5 146.6 L64.5 147.2 L66.0 145.0 L67.0 146.3 L68.0 148.3 L70.0 147.8 L72.0 147.4 L73.0 147.2 L74.5 149.8 L76.0 149.2 L77.0 150.6 L78.0 148.3 L79.5 148.5 L81.5 152.9 L82.5 150.4 L84.5 152.7 L86.0 152.3 L87.5 151.1 L88.5 150.2 L90.5 154.2 L91.5 153.6 L93.0 151.6 L94.5 151.1 L96.0 152.1 L98.0 149.0 L100.0 149.5 L101.0 146.3 L102.0 147.2 L103.5 145.9 L105.0 147.3 L106.0 144.5 L107.0 145.7 L108.5 142.5 L110.0 145.1 L111.0 142.5 L112.5 143.2 L114.0 141.1 L115.0 142.1 L116.0 141.0 L117.5 137.7 L119.0 136.3 L120.0 138.6 L121.5 135.9 L122.5 137.0 L124.5 134.6 L126.5 134.9 L128.0 134.1 L129.5 134.1 L131.0 131.8 L132.0 131.0 L133.0 131.6 L134.0 128.2 L135.0 127.9 L136.5 127.4 L137.5 127.7 L138.5 127.0 L140.5 122.5 L142.5 124.4 L143.5 122.5 L144.5 122.9 L145.5 121.4 L147.0 119.1 L148.0 119.9 L150.0 118.1 L151.0 120.5 L152.0 120.6 L153.5 122.6 L155.0 124.0 L157.0 121.7 L158.5 123.2 L159.5 123.1 L161.0 124.3 L162.0 124.3 L163.0 122.9 L164.0 125.3 L165.5 124.9 L167.0 125.4 L168.5 128.0 L169.5 125.0 L170.5 127.1 L171.5 124.6 L172.5 127.8 L174.0 125.4 L175.5 128.3 L177.5 127.2 L178.5 127.0 L180.0 129.1 L181.0 129.3 L182.0 128.0 L183.0 129.6 L184.0 129.1 L186.0 125.5 L187.0 130.4 L189.0 128.0 L190.0 131.6 L191.0 129.2 L193.0 131.4 L194.0 133.0 L196.0 131.7 L197.0 133.0 L198.0 131.4 L199.5 133.4 L200.5 132.8 L202.5 133.3 L204.5 134.8 L205.5 135.4 L207.5 133.5 L209.0 133.4 L210.0 134.3 L211.5 136.1 L213.5 134.8 L215.5 136.8 L216.5 135.1 L218.5 138.0 L219.5 134.9 L220.5 138.6 L221.5 136.1 L223.0 136.5 L224.0 137.2 L225.0 138.6 L226.5 137.2 L227.5 140.4 L229.0 140.6 L230.0 140.1 L231.5 138.7 L233.0 140.3 L234.0 142.2 L235.0 140.6 L236.5 139.3 L237.5 142.1 L238.5 143.8 L240.0 141.1 L241.0 142.2 L243.0 143.7 L244.5 141.6 L245.5 143.9 L247.5 143.2 L248.5 142.7 L249.5 141.7 L250.5 145.5 L251.5 142.5 L253.0 145.0 L255.0 144.8 L256.5 143.7 L257.5 146.1 L258.5 146.6 L259.5 146.3 L261.5 144.5 L263.0 147.9 L264.0 145.9 L265.5 146.8 L267.5 147.4 L269.5 149.1 L270.5 147.9 L272.5 149.7 L273.5 150.8 L275.5 151.4 L277.5 150.1 L278.5 150.7 L279.5 149.5 L281.5 150.1 L283.5 151.2 L285.0 151.9 L286.5 152.7 L288.0 152.8 L290.0 155.1 L291.5 152.8 L292.5 152.8 L294.0 150.1 L296.0 148.8 L298.0 149.8 L299.0 146.8 L300.0 148.3 L301.0 146.3 L302.5 147.1 L303.5 144.8 L305.0 146.8 L306.5 145.5 L307.5 144.7 L308.5 141.9 L310.5 143.0 L312.0 139.0 L313.5 139.9 L315.0 140.4 L317.0 138.3 L318.0 136.3 L320.0 137.2 L321.5 134.0 L323.0 133.1 L324.0 133.6 L325.0 132.4 L326.5 133.0 L328.5 128.3 L329.5 129.0 L330.5 130.2 L332.0 126.8 L333.0 127.5 L334.0 127.6 L335.5 126.4 L336.5 124.9 L337.5 125.6 L338.5 125.7 L340.0 122.7 L341.0 124.5 L343.0 122.5 L345.0 121.2 L346.0 120.3 L348.0 122.1 L349.0 120.5 L350.5 122.7 L351.5 121.6 L353.0 123.3 L354.5 122.3 L355.5 123.8 L357.5 123.5 L358.5 125.8 L359.5 125.3 L360.5 122.8 L362.5 122.7 L363.5 126.8 L364.5 125.0 L366.5 125.2 L368.5 126.7 L370.0 126.5 L371.5 125.3 L373.0 126.0 L374.0 129.3 L376.0 127.3 L377.0 130.2 L378.0 128.2 L379.0 128.2 L380.0 126.8 L381.0 130.7 L382.0 131.3 L383.0 126.9 L384.5 128.2 L385.5 130.2 L387.5 132.7 L389.5 131.2 L390.5 131.1 L392.5 130.4 L393.5 131.6 L395.0 130.8 L396.0 132.9 L397.5 130.5 L399.5 134.3 L401.5 132.4 L402.5 134.5 L403.5 134.0 L404.5 135.7 L406.0 132.7 L408.0 134.1 L409.5 134.5 L411.5 137.4 L412.5 137.8 L413.5 136.0 L415.5 138.3 L417.0 135.4 L419.0 135.5 L420.5 138.2 L422.0 137.5 L423.0 137.2 L424.0 140.2 L425.0 140.3 L426.0 138.3 L427.0 136.8 L429.0 140.2 L431.0 138.4 L432.0 140.2 L434.0 138.1 L435.0 142.0 L436.0 140.7 L437.0 142.6 L438.5 139.5 L439.5 141.3 L441.5 140.6 L443.5 143.0 L444.5 142.9 L446.5 143.2 L448.5 145.0 L450.5 143.4 L451.5 144.7 L452.5 144.1 L454.5 145.8 L455.5 143.7 L457.0 143.9 L458.0 146.1 L459.0 147.9 L460.0 145.9 L461.5 145.5 L462.5 149.1 L463.5 145.9 L465.0 148.0 L466.5 146.7 L468.5 148.2 L469.5 147.3 L470.5 148.7 L471.5 149.4 L473.0 147.7 L474.0 147.9 L475.0 148.6 L476.0 151.5 L477.0 148.3 L478.0 152.6 L480.0 150.1 L481.0 151.7 L482.0 152.7 L484.0 151.0 L485.0 152.9 L486.0 151.2 L487.0 153.5 L488.0 152.8 L490.0 153.6 L492.0 152.3 L493.0 151.8 L494.5 150.1 L496.5 150.2 L498.0 148.2 L500.0 146.0 L501.5 147.7 L503.0 144.1 L504.0 145.0 L505.0 143.8 L506.5 142.0 L508.0 139.7 L509.0 143.3 L510.0 142.2 L511.0 138.3 L512.5 141.1 L514.5 138.3 L516.0 139.8 L517.0 136.0 L518.0 137.2 L519.0 134.8 L520.0 137.6 L521.5 133.2 L523.0 132.9 L525.0 132.4 L526.5 130.3 L528.0 132.0 L529.5 131.1 L531.0 128.9 L532.5 128.2 L533.5 128.2 L534.5 125.7 L536.5 124.5 L538.5 122.4 L540.5 124.5 L542.0 120.3 L543.0 121.9 L544.0 121.6 L546.0 122.1 L548.0 121.8 L549.0 120.6 L550.5 124.2 L552.0 124.6 L553.0 121.8 L554.0 124.2 L556.0 122.0 L557.0 124.2 L558.0 122.6 L560.0 125.0 L561.5 123.0 L562.5 126.2 L564.0 125.1 L566.0 126.8 L568.0 126.9 L569.5 125.2 L570.5 128.0 L572.5 127.0 L574.0 126.6 L575.5 127.5 L576.5 128.8 L578.0 130.1 L579.5 128.2 L581.5 128.9 L582.5 130.0 L583.5 127.5 L585.5 128.2 L587.0 131.7 L589.0 130.0 L590.0 132.9 L591.5 130.5 L592.5 130.5 L594.0 134.0 L595.5 132.2 L596.5 134.0 L598.5 134.9 L600.0 134.5 L602.0 133.2 L604.0 135.0 L605.5 134.1 L606.5 133.0 L607.5 136.8 L608.5 135.1 L610.5 136.5 L612.5 134.8 L613.5 137.8 L615.5 137.7 L616.5 136.5 L617.5 137.5 L618.5 136.7 L619.5 139.3 L621.5 138.0 L622.5 139.5 L624.5 138.0 L626.5 139.7 L628.5 138.3 L630.0 138.9 L631.0 139.7 L633.0 141.1 L634.0 141.7 L635.0 138.2 L637.0 142.5 L639.0 140.5 L641.0 142.3 L643.0 141.4 L644.0 143.3 L645.5 143.0 L646.5 145.0 L648.0 145.0 L649.5 142.6 L650.5 145.3 L652.5 144.1 L653.5 148.0 L655.0 145.3 L656.0 147.4 L657.5 146.8 L659.0 145.9 L661.0 148.5 L662.0 148.2 L664.0 149.4 L665.0 145.9 L666.5 149.0 L668.5 150.7 L669.5 150.0 L670.5 147.7 L672.5 150.5 L673.5 149.9 L674.5 151.9 L676.5 153.0 L677.5 149.3 L678.5 152.1 L679.5 148.5 L681.0 152.3 L682.0 152.2 L683.0 149.6 L684.0 152.0 L685.0 151.1 L686.0 152.3 L687.5 153.3 L689.0 150.4 L690.0 152.3 L691.0 152.4 L692.5 148.9 L693.5 151.2 L694.5 151.3 L695.5 145.4 L696.5 148.2 L698.5 147.7 L700.5 145.2 L702.5 145.1 L704.0 142.8 L705.0 142.8 L706.0 143.9 L707.0 143.3 L708.0 139.5 L709.0 141.0 L710.0 139.7 L711.5 140.1 L713.5 137.8 L714.5 137.6 L715.5 135.4 L716.5 136.3 L717.5 134.7 L719.0 135.1 L720.5 132.8 L721.5 134.4 L723.5 132.7 L724.5 131.5 L725.5 130.6 L727.5 128.5 L729.0 129.3 L730.5 128.2 L732.5 126.7 L734.0 127.3 L736.0 125.5 L738.0 120.8 L739.5 123.8 L740.5 122.6 L742.0 119.3 L743.0 123.2 L745.0 121.8 L746.0 120.3 L747.0 123.3 L748.5 122.0 L750.0 123.5 L751.0 120.4 L752.0 121.3 L753.0 122.8 L755.0 122.8 L757.0 125.0 L758.0 122.9 L759.0 124.9 L760.0 123.4 L762.0 126.0 L763.0 123.7 L765.0 124.1 L766.0 128.4 L767.0 125.8 L768.0 128.1 L769.0 125.6 L771.0 128.4 L773.0 127.0 L775.0 127.1 L776.5 129.3 L777.5 130.7 L778.5 127.7 L779.5 128.8 L781.5 128.3 L782.5 128.5 L784.0 128.2 L785.0 130.9 L787.0 130.0 L788.0 131.4 L789.5 131.4 L790.5 129.5 L791.5 129.7 L793.5 133.2 L795.5 132.5 L797.5 133.6 L798.5 133.6 L800.5 136.5 L802.0 135.0 L804.0 134.8 L805.0 135.3 L806.0 133.6 L807.0 135.8 L809.0 134.0 L810.5 137.9 L812.0 137.9 L813.0 136.1 L814.0 140.6 L815.0 134.8 L817.0 137.6 L819.0 139.0 L821.0 139.3 L822.0 141.6 L823.0 138.7 L824.5 138.9 L826.5 142.3 L827.5 140.6 L829.5 139.3 L831.0 142.9 L832.0 142.0 L833.0 142.3 L834.5 140.6 L835.5 143.8 L836.5 141.7 L837.5 142.8 L839.5 144.4 L840.5 144.4 L842.0 142.5 L843.0 141.1 L844.0 145.6 L845.5 142.6 L847.0 143.8 L848.5 145.6 L849.5 145.4 L851.0 145.9 L852.0 147.8 L853.5 144.5 L854.5 145.9 L856.5 147.4 L858.5 144.8 L859.5 149.1 L861.0 146.5 L862.5 148.4 L864.0 149.0 L866.0 148.1 L867.0 149.8 L869.0 149.0 L870.0 151.0 L871.0 148.7 L872.0 150.5 L873.0 148.9 L874.0 149.1 L875.5 151.6 L876.5 152.1 L877.5 151.1 L879.5 151.5 L881.0 151.1 L883.0 153.5 L884.5 151.6 L886.0 154.0 L887.0 151.5 L888.0 154.8 L889.0 150.7 L890.0 152.9 L891.5 151.8 L893.0 148.7 L894.5 145.9 L895.5 147.9 L897.0 144.6 L898.5 147.2 L899.5 144.3 L901.5 144.0 L903.0 141.7 L904.0 143.3 L905.5 140.6 L907.5 140.3 L909.0 139.4 L911.0 137.3 L912.5 137.3 L914.5 137.9 L916.5 133.4 L918.0 132.4 L920.0 133.3 L921.0 129.6 L922.0 133.2 L923.0 131.8 L924.0 129.9 L926.0 130.5 L927.0 127.5 L928.5 128.2 L930.0 128.6 L932.0 124.6 L933.0 124.2 L934.5 122.5 L935.5 122.9 L937.5 124.8 L939.5 120.2 L940.5 123.3 L942.5 120.4 L944.5 123.7 L945.5 119.3 L946.5 122.9 L947.5 120.9 L948.5 123.2 L949.5 123.7 L951.0 122.7 L952.0 122.8 L953.0 123.0 L954.5 125.9 L955.5 125.8 L957.0 125.8 L958.0 125.0 L959.0 125.6 L960.0 126.5 L961.0 125.8 L962.5 124.4 L963.5 126.6 L965.0 126.6 L967.0 125.8 L968.0 129.4 L969.0 127.8 L970.5 127.4 L971.5 130.2 L973.5 128.0 L974.5 130.4 L976.5 128.5 L978.0 128.4 L979.0 131.0 L980.5 131.5 L981.5 130.6 L982.5 131.4 L984.5 130.5 L986.0 131.0 L987.5 130.9 L988.5 134.5 L989.5 134.1 L991.5 131.0 L992.5 131.4 L993.5 135.3 L995.5 133.9 L996.5 132.8 L998.5 133.9 L1000.0 131.8 L1001.0 135.8 L1002.0 135.5 L1003.0 133.3 L1004.5 137.0 L1005.5 135.6 L1007.5 134.9 L1009.0 136.7 L1010.0 137.4 L1011.0 135.8 L1013.0 137.9 L1014.0 135.6 L1015.0 139.1" fill="none" stroke="#f2f04e" stroke-width="1.2" stroke-linejoin="miter" stroke-miterlimit="3"/>
<path d="M16.0 148.3 L17.0 147.9 L18.0 146.2 L19.5 147.3 L21.5 146.5 L22.5 147.5 L23.5 145.8 L25.5 147.3 L27.0 149.2 L29.0 147.6 L31.0 148.8 L33.0 146.7 L34.0 148.9 L35.5 150.0 L37.5 148.9 L38.5 150.8 L39.5 149.9 L40.5 151.7 L41.5 149.5 L42.5 152.2 L43.5 150.7 L44.5 151.9 L45.5 151.0 L46.5 153.7 L47.5 153.2 L49.5 152.5 L50.5 154.1 L52.5 154.1 L54.0 152.9 L55.0 154.3 L57.0 154.6 L58.0 153.1 L59.5 157.5 L61.5 154.3 L62.5 157.4 L64.5 155.0 L65.5 156.7 L66.5 157.2 L68.5 155.9 L70.0 157.8 L72.0 159.4 L73.0 157.8 L74.0 159.6 L75.0 158.4 L77.0 158.2 L78.0 161.7 L79.0 161.6 L81.0 158.2 L83.0 159.8 L85.0 161.7 L86.5 160.5 L87.5 162.7 L88.5 161.8 L89.5 163.7 L91.0 161.2 L93.0 161.9 L94.0 164.0 L95.0 163.9 L96.0 162.2 L98.0 163.5 L99.0 164.5 L101.0 165.2 L102.5 165.9 L103.5 166.9 L104.5 166.8 L105.5 163.8 L106.5 167.6 L107.5 167.5 L108.5 166.5 L110.5 168.2 L112.5 169.1 L114.5 170.1 L115.5 167.2 L116.5 171.8 L118.5 167.4 L120.0 171.3 L121.5 170.2 L122.5 171.1 L123.5 168.6 L125.0 171.5 L126.5 169.4 L128.5 170.0 L130.5 172.7 L131.5 172.6 L132.5 172.5 L134.5 172.7 L136.0 172.9 L137.5 173.6 L139.5 171.6 L140.5 172.5 L141.5 171.9 L143.5 173.8 L145.0 175.6 L147.0 174.2 L149.0 176.9 L150.0 177.3 L151.0 175.2 L152.5 176.9 L154.5 178.0 L156.0 176.3 L158.0 179.1 L160.0 179.8 L161.0 181.2 L162.5 177.9 L164.0 179.1 L165.0 176.7 L166.0 178.4 L167.5 175.6 L168.5 175.8 L169.5 173.7 L170.5 174.0 L171.5 171.4 L173.5 173.0 L175.0 172.7 L176.0 170.2 L177.0 171.3 L178.0 167.7 L179.0 169.1 L180.0 170.2 L181.0 167.7 L182.0 166.3 L183.0 165.3 L184.0 164.2 L185.5 165.2 L186.5 162.9 L188.5 163.9 L190.5 162.7 L191.5 162.8 L192.5 160.1 L194.0 161.7 L195.0 160.6 L197.0 159.6 L198.0 158.9 L200.0 156.3 L201.0 154.8 L202.0 154.8 L204.0 152.6 L205.0 154.8 L207.0 150.4 L208.0 150.5 L209.0 152.6 L210.0 151.7 L211.0 148.2 L212.0 150.4 L213.5 147.3 L214.5 148.4 L216.5 147.7 L217.5 146.9 L219.0 146.4 L220.0 148.2 L221.0 146.6 L223.0 148.5 L224.0 147.0 L225.5 149.2 L226.5 146.1 L227.5 149.9 L228.5 146.1 L230.5 149.8 L232.0 148.4 L234.0 149.4 L236.0 152.3 L237.0 149.9 L239.0 149.5 L240.0 151.6 L241.0 151.2 L242.0 152.8 L243.0 151.0 L244.5 150.6 L246.5 154.2 L248.5 153.9 L250.0 154.6 L252.0 153.9 L253.5 152.9 L255.0 155.4 L256.0 154.2 L258.0 157.7 L260.0 153.9 L261.0 157.2 L262.0 157.5 L264.0 156.1 L265.0 158.4 L267.0 156.0 L268.0 155.9 L269.0 159.4 L270.0 157.1 L271.5 158.0 L272.5 158.6 L273.5 160.2 L274.5 157.8 L275.5 161.1 L277.5 162.1 L278.5 158.2 L280.0 159.6 L282.0 161.9 L283.0 161.0 L284.5 161.4 L285.5 161.2 L287.0 162.0 L288.0 159.9 L289.0 162.8 L290.0 164.7 L292.0 163.8 L293.0 162.8 L294.0 165.0 L295.0 163.3 L296.0 164.4 L297.0 163.3 L299.0 165.4 L300.0 163.8 L301.0 165.2 L302.0 168.5 L303.5 165.1 L305.5 168.0 L306.5 166.5 L307.5 168.3 L308.5 164.5 L310.5 168.6 L311.5 168.8 L312.5 170.2 L314.0 167.0 L315.5 168.1 L317.5 169.8 L318.5 167.8 L320.5 168.8 L321.5 170.7 L322.5 168.8 L324.5 169.2 L325.5 172.9 L327.0 170.3 L328.0 171.7 L329.5 171.0 L330.5 173.5 L331.5 171.4 L333.5 174.5 L334.5 171.8 L335.5 174.3 L336.5 173.9 L337.5 172.4 L339.5 172.4 L341.0 175.3 L342.0 173.5 L343.0 176.0 L344.0 176.7 L346.0 175.0 L347.0 177.9 L348.0 175.6 L349.5 176.9 L350.5 176.3 L352.5 176.4 L354.0 175.8 L355.0 177.3 L356.0 177.5 L358.0 178.8 L359.0 179.9 L360.0 177.9 L361.0 179.1 L362.0 178.8 L363.0 176.2 L364.0 178.6 L365.0 173.6 L366.0 174.9 L367.0 175.1 L368.5 172.2 L369.5 174.8 L370.5 171.1 L371.5 172.2 L372.5 169.9 L373.5 172.3 L375.5 169.0 L377.5 171.5 L378.5 166.5 L380.5 165.6 L381.5 166.4 L382.5 165.6 L384.5 165.9 L385.5 161.7 L386.5 161.4 L387.5 159.7 L389.0 161.3 L390.0 159.1 L392.0 160.1 L393.0 158.1 L395.0 158.4 L396.0 156.2 L397.0 155.4 L398.0 153.2 L399.5 154.1 L400.5 155.5 L402.0 152.7 L403.0 154.1 L404.0 152.2 L405.0 153.8 L406.5 147.8 L407.5 151.0 L409.0 145.2 L410.5 150.4 L412.0 145.0 L413.5 148.3 L415.0 147.4 L417.0 145.1 L418.0 145.6 L419.0 147.3 L421.0 146.9 L422.0 148.6 L423.0 145.4 L424.5 149.2 L426.0 147.7 L427.5 149.7 L428.5 149.2 L429.5 148.6 L430.5 147.1 L432.5 150.7 L434.5 151.8 L436.5 151.6 L437.5 150.9 L439.0 150.0 L441.0 152.6 L442.5 150.5 L443.5 153.9 L444.5 152.5 L446.5 154.2 L447.5 152.4 L448.5 154.6 L450.5 153.2 L451.5 153.4 L452.5 155.3 L453.5 154.6 L454.5 154.6 L456.5 155.4 L458.0 157.7 L460.0 155.0 L462.0 157.9 L463.0 156.4 L464.5 159.1 L465.5 157.5 L467.5 158.9 L469.0 158.1 L470.5 159.9 L471.5 158.8 L472.5 161.3 L474.0 159.5 L475.0 159.5 L476.0 161.4 L478.0 162.4 L479.0 160.6 L480.0 163.0 L481.5 162.2 L483.5 162.5 L484.5 160.5 L485.5 161.1 L487.5 163.8 L488.5 162.7 L489.5 164.7 L491.0 165.4 L492.5 163.9 L493.5 165.8 L495.5 166.6 L496.5 167.4 L497.5 163.6 L498.5 166.5 L500.5 164.0 L502.0 167.8 L504.0 165.6 L506.0 168.9 L507.0 165.6 L508.0 166.5 L509.0 169.6 L510.0 166.5 L511.0 168.9 L513.0 168.8 L515.0 170.4 L516.0 167.6 L517.5 171.3 L519.0 169.8 L520.0 171.0 L521.0 170.2 L522.5 172.2 L524.5 170.2 L526.0 174.4 L527.0 172.1 L528.0 170.8 L529.0 172.2 L530.5 172.7 L532.5 171.0 L533.5 175.0 L535.0 172.6 L536.0 175.2 L537.0 175.0 L538.0 174.2 L540.0 173.3 L541.5 173.3 L542.5 178.3 L544.5 176.1 L545.5 177.9 L547.0 176.3 L548.5 178.8 L549.5 177.9 L550.5 176.9 L551.5 179.0 L553.0 178.0 L555.0 180.9 L557.0 178.9 L558.0 179.4 L559.0 177.4 L560.0 178.3 L561.5 175.1 L563.0 174.9 L565.0 174.1 L566.0 172.9 L567.0 175.0 L568.0 172.2 L569.0 171.8 L570.0 170.6 L571.0 171.1 L573.0 165.0 L574.0 170.5 L575.0 167.8 L577.0 167.7 L578.0 165.2 L579.0 163.4 L580.0 166.6 L581.0 164.5 L582.5 164.0 L584.5 164.8 L586.0 161.9 L587.0 162.0 L589.0 160.3 L590.0 159.3 L591.5 160.9 L593.5 155.6 L594.5 157.7 L595.5 154.7 L596.5 155.5 L598.5 156.0 L600.5 153.9 L602.5 151.8 L603.5 153.7 L604.5 150.2 L605.5 151.7 L606.5 148.6 L607.5 149.5 L609.5 147.6 L610.5 144.8 L611.5 145.2 L612.5 145.7 L614.0 147.9 L615.0 146.4 L616.5 144.9 L618.0 148.8 L619.0 144.9 L620.5 150.1 L622.5 149.7 L624.0 147.9 L625.5 148.3 L627.5 149.1 L629.5 150.0 L631.5 147.7 L633.5 149.0 L635.5 151.0 L637.5 152.5 L638.5 151.2 L639.5 153.4 L640.5 154.3 L641.5 153.8 L643.0 151.5 L644.5 154.9 L645.5 152.0 L647.0 153.8 L649.0 153.7 L650.5 155.1 L652.0 154.6 L653.0 156.2 L654.0 155.3 L656.0 157.4 L657.0 156.2 L658.0 158.6 L659.0 156.4 L660.5 159.2 L662.0 157.0 L663.0 156.3 L664.0 157.9 L665.5 156.8 L666.5 159.5 L668.5 158.2 L669.5 157.7 L670.5 159.6 L671.5 160.1 L673.5 161.2 L674.5 159.4 L676.5 162.9 L678.0 160.8 L679.5 162.4 L680.5 162.8 L681.5 161.4 L683.0 162.2 L684.5 163.7 L686.5 161.1 L688.5 166.0 L690.0 163.2 L691.5 163.7 L693.5 164.9 L694.5 163.8 L695.5 167.3 L697.5 164.5 L698.5 165.5 L699.5 164.3 L701.0 166.9 L702.0 165.4 L703.0 170.3 L704.5 168.3 L705.5 169.1 L707.0 169.6 L708.5 166.6 L709.5 169.8 L711.0 169.3 L712.5 168.3 L714.5 171.1 L715.5 169.3 L716.5 172.4 L718.0 168.9 L719.0 171.0 L720.0 169.6 L721.0 169.9 L723.0 172.3 L725.0 174.4 L726.0 172.3 L727.5 171.7 L728.5 173.4 L729.5 174.1 L731.0 172.9 L732.0 174.7 L733.0 173.6 L735.0 173.6 L736.0 173.4 L737.0 176.1 L738.0 174.4 L739.0 176.3 L740.5 176.3 L742.5 176.3 L744.0 177.6 L745.5 177.2 L747.5 177.7 L749.5 177.2 L750.5 178.4 L752.5 178.6 L754.0 178.2 L755.0 177.4 L757.0 177.1 L758.5 176.7 L760.0 173.7 L761.0 176.3 L763.0 172.3 L764.0 171.7 L765.0 173.0 L767.0 170.0 L769.0 171.5 L770.0 168.6 L772.0 168.1 L773.0 165.6 L774.5 168.4 L775.5 165.9 L777.5 166.4 L778.5 163.9 L779.5 167.4 L780.5 162.7 L782.5 163.4 L783.5 161.3 L785.5 160.6 L786.5 159.0 L788.0 160.0 L789.5 157.2 L791.0 158.2 L792.5 154.8 L794.5 155.4 L795.5 153.8 L796.5 155.3 L797.5 153.7 L799.5 153.0 L800.5 151.0 L802.0 150.9 L803.5 150.1 L805.5 150.7 L807.0 149.4 L808.0 149.0 L809.0 145.6 L810.0 146.2 L812.0 145.2 L814.0 148.2 L815.5 146.2 L816.5 147.6 L817.5 146.1 L818.5 149.3 L820.0 149.6 L822.0 150.3 L823.0 149.2 L825.0 149.1 L827.0 148.0 L828.5 150.7 L830.0 150.8 L832.0 150.0 L833.0 152.0 L834.5 150.7 L836.5 152.6 L838.0 150.0 L839.0 154.5 L840.5 150.7 L842.0 154.3 L843.5 152.5 L844.5 156.0 L846.0 153.5 L847.0 155.1 L848.0 156.6 L849.0 154.8 L850.5 155.8 L851.5 154.4 L853.5 156.4 L855.0 156.1 L857.0 157.9 L858.0 156.5 L860.0 157.7 L861.0 156.4 L862.0 158.7 L863.0 158.1 L865.0 159.8 L866.0 158.6 L867.5 158.9 L868.5 162.4 L869.5 157.6 L871.5 159.8 L872.5 159.1 L874.5 162.4 L875.5 159.6 L877.5 162.6 L879.5 161.5 L880.5 163.1 L881.5 165.0 L883.5 162.1 L885.5 163.0 L887.0 165.0 L888.5 163.0 L889.5 164.6 L891.0 163.4 L892.5 166.1 L894.5 163.5 L896.0 167.6 L897.0 165.0 L898.5 168.1 L900.0 167.4 L902.0 165.8 L903.0 166.6 L905.0 169.5 L906.0 166.2 L907.5 169.3 L909.0 169.2 L910.5 170.3 L912.0 171.6 L914.0 168.9 L916.0 171.6 L918.0 172.8 L919.0 167.8 L920.5 173.1 L922.5 171.3 L923.5 174.2 L924.5 171.9 L926.5 172.8 L928.0 172.7 L929.0 173.6 L930.0 175.2 L931.5 172.5 L933.0 174.6 L934.5 175.5 L935.5 174.0 L937.0 173.3 L939.0 174.0 L940.0 178.7 L941.0 177.7 L942.5 179.6 L944.0 176.9 L945.0 178.7 L946.0 178.7 L947.0 178.3 L948.5 179.9 L949.5 178.4 L951.0 177.3 L952.0 180.3 L954.0 176.8 L956.0 177.9 L957.5 177.4 L959.5 173.1 L961.5 172.0 L963.0 172.9 L964.5 169.2 L966.0 168.8 L967.5 169.0 L968.5 170.2 L970.5 166.5 L972.5 166.1 L973.5 166.6 L975.5 164.7 L976.5 165.2 L977.5 162.8 L978.5 163.9 L980.5 160.9 L982.0 159.5 L983.5 158.4 L985.5 162.6 L987.0 159.7 L989.0 157.6 L990.5 158.5 L991.5 156.3 L992.5 154.0 L994.5 151.9 L996.0 153.2 L997.0 152.7 L998.5 149.7 L999.5 150.0 L1001.0 151.6 L1002.0 148.2 L1003.0 149.7 L1005.0 147.2 L1007.0 145.4 L1009.0 145.6 L1010.0 148.7 L1012.0 145.9 L1014.0 148.5 L1015.0 146.9 L1016.0 149.2" fill="none" stroke="#3ee4dc" stroke-width="1.2" stroke-linejoin="miter" stroke-miterlimit="3"/>
<path d="M16.0 191.9 L17.0 192.6 L18.0 193.3 L19.0 193.1 L20.0 192.0 L21.5 190.3 L23.5 189.6 L25.5 186.2 L27.0 188.5 L29.0 185.5 L30.5 184.7 L31.5 184.9 L32.5 184.5 L34.0 182.1 L35.5 183.0 L37.5 179.3 L39.0 180.5 L40.0 177.5 L42.0 179.9 L43.5 179.9 L45.5 177.3 L46.5 175.7 L47.5 176.4 L49.0 172.9 L50.0 176.1 L51.5 173.1 L52.5 174.1 L54.0 173.6 L55.5 174.2 L56.5 172.0 L57.5 169.8 L59.0 168.5 L60.0 167.1 L61.0 168.4 L62.0 169.2 L63.5 170.4 L65.5 168.8 L67.5 169.9 L69.5 169.1 L71.0 170.2 L72.5 173.0 L73.5 171.1 L74.5 173.6 L75.5 172.8 L77.5 174.6 L78.5 176.1 L79.5 173.0 L80.5 175.9 L81.5 173.5 L82.5 175.8 L84.0 174.5 L85.5 177.4 L87.5 176.4 L89.5 174.6 L91.0 178.1 L92.5 176.6 L93.5 177.2 L95.0 177.0 L97.0 178.7 L98.0 177.7 L99.0 178.5 L100.0 180.3 L101.5 178.9 L102.5 178.6 L104.0 181.2 L105.0 181.5 L107.0 182.0 L108.0 182.7 L110.0 183.8 L112.0 182.3 L113.0 184.9 L114.0 183.8 L116.0 183.9 L117.5 183.2 L119.0 182.9 L121.0 185.4 L122.0 185.6 L123.0 183.9 L124.0 186.5 L125.5 183.1 L126.5 187.2 L127.5 189.4 L129.0 186.5 L130.0 187.3 L131.5 186.5 L133.0 190.3 L135.0 186.9 L136.5 191.3 L137.5 189.0 L138.5 189.3 L140.5 188.4 L142.5 190.8 L143.5 189.8 L145.5 192.1 L146.5 190.0 L148.0 191.1 L150.0 193.0 L151.0 191.6 L153.0 192.2 L154.0 193.4 L155.0 196.6 L157.0 193.7 L159.0 196.0 L161.0 194.7 L162.0 196.3 L163.0 194.9 L164.5 197.4 L165.5 196.1 L166.5 196.6 L167.5 195.4 L169.0 198.8 L170.0 196.8 L171.0 198.1 L173.0 196.8 L175.0 199.6 L176.5 197.6 L177.5 197.6 L178.5 200.7 L179.5 198.5 L180.5 201.2 L181.5 198.8 L182.5 201.9 L183.5 199.5 L185.0 201.1 L187.0 200.8 L188.5 203.4 L189.5 201.4 L191.5 202.4 L193.5 205.1 L195.5 205.6 L197.0 201.9 L199.0 200.7 L200.5 202.4 L202.5 198.3 L204.5 199.9 L206.5 196.9 L207.5 198.1 L209.0 196.0 L210.0 197.4 L211.0 194.4 L212.0 196.3 L214.0 192.3 L215.0 193.5 L216.0 192.9 L217.0 192.6 L219.0 190.3 L221.0 189.2 L223.0 190.3 L224.0 189.2 L225.5 185.4 L227.0 186.8 L228.5 186.7 L230.5 184.1 L232.5 183.9 L233.5 180.0 L234.5 184.9 L236.0 180.1 L237.5 179.0 L238.5 178.4 L240.0 178.8 L241.0 180.2 L242.5 177.2 L243.5 180.2 L244.5 175.0 L246.0 178.0 L247.5 175.4 L249.0 172.2 L250.0 172.6 L251.0 172.8 L252.5 174.3 L254.5 171.5 L256.5 167.7 L257.5 170.1 L259.5 168.1 L261.0 170.9 L263.0 170.2 L264.0 169.7 L265.0 171.8 L267.0 169.4 L269.0 170.6 L270.5 172.4 L272.5 171.9 L273.5 173.6 L274.5 173.7 L276.5 175.0 L278.5 175.4 L280.5 173.1 L281.5 176.6 L282.5 174.2 L283.5 176.6 L285.0 178.0 L286.0 175.8 L288.0 179.1 L290.0 176.8 L292.0 178.5 L293.0 180.0 L294.0 177.1 L295.0 177.8 L296.5 179.3 L298.5 177.4 L300.0 179.1 L301.5 180.3 L303.0 179.2 L304.0 183.3 L305.0 180.7 L306.0 182.6 L307.0 182.2 L308.0 181.2 L310.0 183.0 L312.0 181.1 L314.0 184.5 L315.0 183.1 L316.0 183.9 L317.0 182.2 L319.0 185.5 L320.0 183.6 L321.0 185.3 L322.0 183.8 L324.0 183.7 L325.0 184.2 L326.0 187.8 L327.5 186.0 L329.5 187.9 L330.5 186.6 L332.5 190.4 L333.5 187.3 L335.0 187.9 L336.0 187.2 L338.0 188.7 L339.0 189.4 L340.0 188.8 L341.0 191.9 L342.5 188.9 L343.5 192.2 L344.5 189.6 L346.5 192.1 L348.0 193.8 L349.0 190.4 L351.0 195.0 L353.0 191.2 L354.0 194.0 L356.0 193.1 L357.0 194.9 L358.5 194.3 L360.0 194.3 L362.0 196.2 L364.0 195.5 L366.0 198.1 L367.5 196.2 L368.5 199.2 L370.0 196.9 L371.5 200.7 L373.0 197.1 L374.0 199.3 L375.5 200.1 L376.5 199.0 L377.5 201.9 L379.0 200.2 L381.0 202.1 L383.0 199.0 L384.0 200.1 L385.5 203.3 L387.0 203.3 L389.0 201.3 L390.0 204.0 L391.0 204.2 L393.0 202.7 L394.0 206.5 L395.5 202.9 L396.5 203.1 L397.5 200.9 L398.5 202.3 L399.5 199.7 L400.5 201.0 L402.5 198.6 L404.0 198.6 L405.5 197.1 L406.5 198.5 L408.0 194.9 L410.0 197.4 L412.0 193.2 L414.0 191.3 L415.0 192.9 L416.0 190.2 L417.0 191.6 L418.0 189.2 L419.5 189.8 L420.5 187.0 L422.0 189.1 L424.0 184.7 L425.0 186.7 L426.0 185.4 L427.5 186.3 L429.5 181.7 L430.5 183.6 L431.5 182.0 L433.5 181.7 L434.5 181.7 L435.5 181.5 L436.5 181.3 L437.5 179.3 L439.5 180.3 L441.0 178.6 L442.0 178.3 L443.5 173.9 L444.5 173.6 L445.5 174.9 L447.0 175.5 L448.0 173.4 L449.0 173.6 L450.0 171.1 L452.0 171.9 L453.0 167.8 L454.5 170.3 L455.5 167.7 L457.5 170.3 L459.0 169.7 L461.0 172.9 L463.0 169.8 L464.5 173.8 L465.5 170.8 L466.5 171.9 L467.5 173.2 L469.0 172.7 L470.0 171.6 L471.0 174.9 L473.0 174.9 L475.0 174.2 L476.0 172.9 L478.0 177.1 L480.0 177.6 L481.5 175.1 L483.5 178.9 L485.0 176.7 L487.0 177.3 L489.0 176.1 L491.0 179.3 L492.5 178.1 L493.5 180.2 L495.5 179.3 L496.5 180.9 L497.5 179.5 L499.0 181.3 L501.0 179.9 L502.0 180.6 L504.0 179.8 L505.0 182.3 L506.0 183.2 L507.0 181.5 L508.5 181.8 L510.5 180.1 L511.5 184.3 L513.0 182.6 L514.0 184.9 L515.0 183.8 L516.5 186.8 L517.5 184.8 L519.5 186.8 L520.5 184.4 L522.5 187.4 L524.5 187.7 L526.5 187.1 L527.5 188.1 L529.0 185.7 L531.0 189.9 L532.5 189.0 L534.5 188.8 L536.0 190.4 L537.0 189.3 L539.0 189.8 L540.5 189.3 L541.5 190.9 L542.5 189.7 L543.5 190.4 L544.5 192.3 L546.5 192.7 L547.5 191.4 L548.5 193.8 L550.0 192.9 L551.5 194.4 L552.5 195.2 L553.5 193.2 L554.5 195.0 L556.5 194.5 L558.0 195.3 L559.5 194.7 L560.5 195.4 L561.5 195.9 L562.5 194.8 L563.5 197.0 L565.0 198.2 L566.0 196.3 L567.0 195.4 L568.0 196.1 L569.0 198.3 L570.0 197.0 L571.0 196.9 L573.0 200.9 L574.0 198.6 L575.0 199.0 L576.0 200.4 L577.5 202.1 L578.5 198.7 L579.5 201.6 L580.5 198.4 L582.0 201.4 L584.0 201.4 L585.0 204.1 L586.0 200.7 L588.0 203.5 L590.0 204.1 L591.5 204.8 L593.0 204.0 L595.0 201.3 L597.0 203.0 L598.5 198.2 L600.5 198.7 L601.5 198.4 L602.5 200.1 L604.0 198.1 L605.5 196.1 L607.0 196.2 L608.0 195.2 L609.5 196.7 L611.0 191.3 L612.0 194.4 L613.0 191.1 L614.0 192.6 L615.0 191.9 L616.5 188.3 L618.5 190.7 L619.5 187.3 L620.5 186.6 L621.5 189.5 L622.5 186.3 L624.0 186.0 L626.0 184.3 L627.5 184.6 L629.5 181.5 L630.5 181.2 L632.5 179.5 L633.5 181.1 L634.5 177.9 L636.0 179.9 L637.0 175.8 L638.5 177.4 L639.5 177.8 L640.5 176.7 L642.0 174.6 L643.0 174.3 L644.0 175.5 L645.0 175.3 L646.5 173.8 L647.5 173.2 L648.5 173.1 L650.5 169.4 L652.0 171.5 L654.0 168.5 L656.0 168.1 L657.5 170.2 L658.5 169.4 L659.5 172.4 L661.0 169.3 L662.5 172.5 L663.5 170.8 L665.5 172.4 L666.5 172.1 L667.5 173.1 L669.5 176.3 L671.5 172.6 L672.5 175.9 L673.5 174.4 L674.5 174.4 L676.0 175.6 L677.5 175.0 L679.0 177.8 L680.0 176.9 L681.0 175.7 L683.0 178.1 L684.0 176.0 L685.5 175.6 L686.5 176.2 L688.5 179.4 L690.0 179.1 L692.0 178.0 L693.0 177.7 L695.0 181.5 L696.0 178.4 L698.0 179.2 L699.0 181.2 L700.0 181.1 L702.0 179.6 L703.5 183.0 L704.5 180.5 L706.5 181.9 L708.0 182.2 L709.5 181.8 L710.5 183.7 L711.5 183.8 L712.5 183.0 L714.5 185.1 L715.5 183.7 L717.0 183.0 L719.0 187.8 L720.0 184.9 L721.0 186.7 L723.0 185.3 L725.0 187.2 L727.0 187.5 L728.5 189.6 L729.5 189.8 L731.0 189.1 L733.0 188.5 L734.5 187.6 L735.5 189.2 L736.5 191.3 L737.5 191.8 L738.5 190.9 L740.5 190.3 L741.5 191.0 L743.0 190.8 L744.0 192.0 L745.0 191.3 L746.0 194.0 L747.5 192.8 L749.0 193.8 L751.0 195.4 L752.5 195.5 L753.5 194.3 L754.5 196.2 L755.5 194.9 L757.0 196.2 L759.0 195.3 L760.5 195.5 L762.0 195.7 L763.0 198.2 L764.0 198.8 L765.5 199.4 L766.5 199.3 L768.0 199.0 L770.0 199.3 L771.0 196.9 L772.0 200.3 L774.0 197.1 L775.0 198.1 L776.5 200.4 L778.5 198.8 L779.5 201.2 L781.5 202.5 L783.5 201.4 L785.5 204.1 L787.0 202.8 L789.0 201.6 L791.0 202.7 L792.0 202.0 L793.0 205.0 L794.5 200.7 L795.5 202.1 L797.0 199.2 L798.5 199.9 L800.5 196.5 L802.5 197.8 L803.5 197.6 L805.5 194.4 L806.5 194.0 L808.0 195.5 L809.5 193.7 L811.0 194.5 L812.5 191.5 L814.5 188.3 L816.5 190.2 L818.5 187.8 L819.5 188.7 L821.0 185.7 L822.5 186.9 L823.5 185.6 L825.5 183.4 L827.0 184.7 L829.0 182.9 L830.0 179.6 L831.0 181.5 L832.0 177.9 L833.0 178.0 L834.0 178.2 L835.0 180.0 L836.0 177.9 L837.5 178.1 L838.5 179.4 L840.5 175.2 L841.5 175.3 L843.5 171.5 L845.0 171.6 L846.5 172.4 L847.5 170.3 L849.5 172.1 L850.5 171.5 L852.0 166.8 L854.0 171.0 L855.0 167.3 L856.0 170.1 L857.0 169.5 L858.0 169.1 L859.5 170.9 L861.0 169.6 L863.0 171.5 L864.0 173.4 L865.0 172.2 L866.0 173.8 L868.0 172.2 L869.0 174.8 L870.5 172.0 L871.5 174.6 L873.5 173.4 L874.5 175.5 L876.0 174.9 L877.0 176.2 L878.0 174.6 L879.0 174.1 L880.0 174.3 L881.5 176.7 L882.5 175.1 L884.5 178.0 L885.5 176.7 L887.5 176.2 L889.5 179.7 L890.5 177.5 L892.0 179.7 L894.0 178.0 L895.0 181.9 L896.0 182.2 L897.5 179.6 L898.5 181.0 L899.5 179.1 L901.5 181.7 L902.5 180.4 L903.5 183.6 L904.5 180.5 L905.5 184.0 L907.5 180.9 L908.5 181.9 L909.5 182.8 L910.5 185.5 L911.5 187.1 L912.5 184.6 L914.0 186.7 L915.0 186.4 L916.0 186.1 L917.0 185.2 L918.0 186.8 L919.0 184.4 L920.0 185.8 L921.0 187.2 L923.0 185.3 L924.5 186.7 L925.5 187.3 L926.5 188.4 L928.5 186.4 L929.5 189.8 L931.0 189.3 L932.5 190.1 L934.0 188.7 L935.0 191.9 L936.5 188.7 L938.0 191.1 L939.0 189.1 L940.0 190.1 L941.0 191.5 L942.0 194.0 L943.0 191.4 L944.0 193.5 L945.5 191.9 L947.0 194.6 L948.5 193.1 L949.5 195.0 L951.5 194.5 L952.5 194.5 L953.5 193.7 L955.0 197.0 L956.5 193.8 L958.0 196.2 L960.0 195.0 L962.0 197.6 L964.0 196.4 L966.0 200.1 L967.0 197.5 L969.0 199.4 L970.0 200.0 L971.5 199.0 L973.0 201.2 L974.5 200.0 L975.5 202.4 L977.5 199.7 L978.5 200.5 L979.5 200.9 L980.5 201.3 L982.0 202.1 L983.5 201.3 L985.0 204.6 L986.0 202.3 L987.0 203.2 L989.0 205.3 L991.0 200.5 L992.0 202.6 L993.0 200.6 L994.5 201.6 L996.5 198.1 L998.5 198.3 L999.5 198.9 L1001.5 198.6 L1003.0 195.1 L1004.0 197.3 L1006.0 193.8 L1007.5 194.8 L1009.5 190.3 L1011.5 192.3 L1013.5 189.0 L1015.0 189.8" fill="none" stroke="#e040e0" stroke-width="1.2" stroke-linejoin="miter" stroke-miterlimit="3"/>
<path d="M16.0 274.9 L17.0 277.7 L18.0 275.2 L19.0 279.3 L20.5 276.8 L22.0 279.3 L23.0 279.4 L24.5 279.4 L25.5 276.9 L27.0 280.6 L28.5 279.3 L29.5 278.1 L30.5 281.1 L32.0 278.8 L33.0 283.6 L34.0 281.2 L35.0 279.6 L36.0 282.3 L38.0 280.6 L40.0 283.8 L41.0 283.0 L42.0 281.3 L43.0 284.5 L44.5 283.0 L45.5 281.5 L47.5 283.7 L48.5 281.6 L50.0 283.7 L52.0 282.2 L53.0 279.6 L54.0 278.0 L56.0 278.8 L58.0 278.1 L59.0 276.1 L60.0 277.1 L62.0 275.0 L63.0 275.3 L65.0 274.1 L66.5 273.1 L68.5 270.7 L70.0 271.2 L71.0 268.4 L73.0 269.9 L75.0 267.1 L76.5 265.5 L77.5 265.6 L79.5 262.7 L80.5 263.4 L81.5 264.3 L83.5 262.4 L85.5 261.1 L86.5 261.0 L88.5 259.9 L90.5 257.9 L92.0 258.7 L93.0 254.8 L94.0 255.6 L95.5 258.9 L96.5 255.5 L98.5 252.9 L99.5 251.8 L101.0 252.6 L103.0 251.8 L105.0 250.4 L106.5 252.0 L108.5 251.1 L109.5 250.5 L111.0 252.3 L112.0 251.5 L113.0 253.5 L114.5 254.0 L116.0 254.6 L117.0 253.6 L118.0 253.9 L120.0 252.4 L121.0 256.8 L122.5 254.6 L123.5 256.9 L124.5 257.5 L125.5 254.2 L127.5 256.9 L129.5 255.8 L131.5 257.2 L133.0 257.2 L134.0 257.9 L135.0 258.1 L136.0 256.8 L137.0 259.7 L138.0 259.2 L139.0 257.8 L140.0 260.5 L141.5 259.2 L142.5 261.4 L144.0 259.1 L145.5 259.2 L147.0 258.1 L149.0 262.3 L150.0 259.3 L151.5 263.8 L152.5 261.5 L153.5 263.1 L154.5 260.4 L156.0 263.3 L157.0 263.8 L158.0 261.7 L159.5 262.1 L160.5 264.2 L162.5 263.1 L164.5 263.6 L165.5 266.2 L166.5 264.9 L167.5 266.5 L168.5 265.0 L170.0 267.1 L172.0 264.6 L173.0 268.0 L175.0 265.0 L176.0 268.6 L177.5 267.2 L178.5 268.4 L180.0 268.6 L181.5 266.9 L183.0 268.7 L184.0 269.4 L185.0 270.1 L186.0 270.3 L187.0 268.7 L188.0 269.9 L189.0 268.4 L190.5 272.1 L191.5 273.0 L192.5 271.0 L193.5 272.4 L195.0 271.6 L196.0 273.4 L197.5 271.2 L198.5 273.3 L200.5 273.1 L202.0 272.4 L204.0 275.0 L205.0 272.5 L207.0 275.6 L208.5 274.8 L209.5 273.0 L210.5 273.4 L211.5 276.2 L213.0 275.7 L215.0 275.5 L216.0 277.8 L217.0 275.8 L218.0 276.0 L220.0 278.8 L221.0 275.6 L222.0 279.7 L224.0 280.2 L225.0 278.5 L226.0 278.7 L227.0 281.8 L228.0 279.0 L230.0 280.6 L231.0 279.7 L232.5 282.0 L234.5 281.3 L236.5 282.8 L237.5 281.6 L238.5 281.8 L240.0 283.4 L241.5 282.8 L242.5 283.8 L243.5 281.4 L244.5 285.7 L245.5 282.2 L246.5 282.8 L247.5 281.2 L248.5 282.0 L250.5 280.6 L251.5 280.1 L253.5 277.6 L254.5 276.6 L256.5 278.1 L258.0 274.9 L259.5 275.0 L260.5 274.9 L261.5 274.3 L262.5 272.7 L263.5 270.8 L265.0 269.8 L266.0 271.1 L267.0 271.2 L268.0 269.2 L270.0 270.0 L272.0 267.9 L273.0 267.8 L274.5 267.0 L276.5 265.0 L277.5 264.8 L278.5 263.5 L279.5 264.3 L281.0 261.0 L282.0 261.7 L284.0 257.6 L286.0 260.5 L287.0 257.7 L288.0 258.7 L289.0 257.3 L290.0 255.0 L291.5 256.0 L293.0 253.0 L295.0 255.3 L296.0 254.4 L298.0 251.8 L300.0 253.0 L301.0 249.8 L303.0 251.5 L305.0 250.4 L306.0 252.5 L308.0 251.6 L309.0 250.0 L311.0 253.9 L313.0 250.8 L314.5 252.2 L316.5 254.7 L317.5 254.2 L319.0 253.2 L320.0 256.8 L321.5 253.0 L323.5 253.5 L324.5 255.9 L326.5 254.3 L327.5 257.2 L328.5 257.8 L330.5 256.5 L331.5 258.0 L333.0 257.9 L334.0 254.7 L335.5 258.4 L337.0 257.5 L338.0 256.0 L339.5 259.5 L341.0 260.7 L342.0 258.9 L343.0 259.7 L344.0 260.2 L345.0 261.2 L347.0 259.8 L348.0 259.8 L349.0 263.9 L350.5 260.7 L352.5 264.5 L353.5 262.4 L354.5 261.9 L355.5 264.5 L356.5 263.9 L358.5 262.5 L360.5 263.5 L362.0 263.0 L364.0 266.1 L365.5 263.2 L366.5 266.0 L368.5 265.0 L369.5 267.2 L370.5 263.7 L371.5 268.2 L373.5 265.7 L375.5 266.4 L376.5 269.4 L377.5 270.3 L378.5 268.5 L379.5 268.5 L381.5 270.1 L382.5 270.0 L384.0 269.8 L386.0 271.0 L387.5 272.3 L389.0 270.3 L390.0 269.9 L391.0 272.9 L392.5 272.3 L393.5 272.2 L394.5 272.0 L395.5 272.9 L397.5 273.5 L399.0 271.6 L400.0 274.7 L402.0 274.2 L403.0 275.6 L404.0 273.8 L405.5 275.8 L406.5 274.3 L408.5 277.5 L410.5 277.5 L412.0 277.8 L414.0 276.1 L416.0 277.5 L417.5 279.1 L418.5 276.5 L419.5 277.7 L421.0 277.2 L422.0 280.2 L423.5 278.1 L425.0 280.3 L426.0 278.9 L428.0 280.1 L429.0 280.0 L430.0 278.7 L431.0 280.1 L433.0 279.4 L434.5 283.0 L435.5 282.2 L436.5 283.1 L437.5 281.9 L438.5 281.3 L440.0 285.0 L442.0 284.7 L443.0 282.2 L444.0 284.1 L446.0 282.6 L447.0 279.5 L449.0 280.5 L450.0 278.3 L451.0 279.1 L452.5 277.4 L454.0 277.5 L455.0 275.4 L457.0 277.2 L458.0 273.4 L459.0 274.4 L460.0 272.2 L461.5 273.7 L462.5 270.7 L464.5 272.6 L465.5 270.3 L467.0 270.3 L469.0 269.1 L470.5 268.3 L471.5 268.8 L472.5 266.7 L474.0 264.0 L475.0 265.7 L476.0 265.1 L477.0 262.8 L478.0 262.0 L479.5 262.0 L481.0 259.2 L482.0 259.6 L483.5 259.0 L485.0 259.4 L486.0 257.5 L487.5 257.6 L488.5 259.7 L489.5 256.1 L491.5 256.2 L493.0 254.4 L494.5 254.7 L495.5 252.1 L497.5 253.1 L499.0 252.4 L501.0 250.9 L503.0 252.0 L504.5 252.2 L506.0 251.0 L508.0 253.2 L509.0 250.6 L510.0 254.9 L511.5 253.2 L512.5 252.4 L513.5 255.2 L514.5 252.5 L515.5 255.7 L517.5 256.2 L518.5 254.2 L519.5 256.8 L521.5 254.7 L523.0 256.4 L524.0 256.3 L525.5 258.3 L526.5 256.7 L527.5 258.9 L529.5 256.0 L530.5 259.0 L531.5 257.0 L533.0 257.8 L534.0 256.5 L535.5 259.5 L537.5 257.8 L538.5 261.4 L539.5 260.3 L540.5 259.4 L541.5 259.0 L543.0 259.6 L544.0 262.7 L545.0 261.2 L547.0 262.6 L549.0 261.4 L550.5 263.1 L551.5 263.7 L552.5 261.3 L553.5 265.0 L554.5 262.4 L556.0 262.5 L558.0 265.4 L560.0 265.4 L561.5 264.1 L562.5 265.4 L563.5 264.8 L564.5 264.9 L566.0 267.4 L568.0 265.2 L570.0 268.3 L571.0 269.8 L572.0 267.0 L573.0 269.0 L574.0 268.8 L575.5 267.4 L576.5 268.3 L578.0 270.3 L580.0 266.8 L581.0 268.5 L582.5 270.7 L583.5 269.8 L584.5 271.1 L586.0 269.7 L587.5 273.1 L588.5 269.4 L589.5 273.0 L590.5 271.0 L591.5 273.9 L593.5 273.3 L594.5 272.4 L595.5 273.4 L597.5 274.0 L598.5 273.7 L600.0 275.2 L602.0 274.1 L603.0 276.3 L604.0 274.6 L606.0 273.6 L607.0 276.7 L608.0 277.0 L610.0 275.4 L612.0 278.4 L614.0 278.8 L616.0 277.7 L617.0 277.6 L618.5 277.9 L619.5 279.6 L621.0 278.3 L622.0 277.7 L623.5 280.2 L625.5 278.8 L626.5 279.8 L628.0 280.5 L629.5 280.4 L631.5 283.4 L632.5 281.1 L634.0 283.2 L636.0 281.2 L637.0 284.0 L638.0 282.7 L639.0 284.2 L640.0 283.3 L641.0 283.6 L643.0 285.1 L644.5 279.5 L645.5 281.4 L647.5 280.2 L649.5 276.8 L650.5 279.0 L651.5 276.5 L652.5 277.5 L653.5 274.6 L655.5 274.6 L657.0 272.6 L658.5 273.9 L659.5 271.1 L661.0 271.0 L662.5 270.6 L664.5 270.2 L666.5 267.2 L668.5 267.6 L670.5 264.1 L672.5 265.4 L673.5 263.4 L675.5 262.8 L676.5 263.4 L678.5 260.8 L679.5 259.1 L681.5 259.7 L682.5 257.9 L684.0 260.0 L686.0 258.5 L687.0 255.4 L688.5 255.2 L689.5 255.3 L691.0 252.9 L692.5 254.1 L694.0 250.7 L695.0 252.0 L696.0 250.2 L697.0 248.9 L698.0 252.4 L699.0 250.2 L701.0 254.0 L702.0 250.9 L704.0 251.5 L705.5 252.7 L706.5 251.2 L708.0 254.0 L709.0 251.9 L710.0 252.3 L711.5 252.8 L712.5 251.2 L713.5 254.8 L714.5 253.5 L715.5 255.4 L716.5 253.9 L718.5 258.5 L719.5 257.8 L721.0 254.9 L722.0 255.2 L723.5 258.7 L725.5 258.5 L727.5 256.4 L729.0 257.6 L730.0 259.5 L732.0 260.9 L733.5 258.2 L734.5 261.8 L736.0 258.9 L737.5 261.8 L738.5 258.7 L739.5 260.0 L741.0 262.8 L742.0 260.7 L743.0 262.9 L744.0 261.1 L745.0 261.3 L746.0 260.8 L747.0 264.0 L749.0 262.5 L751.0 264.6 L752.0 264.1 L753.0 261.8 L755.0 267.1 L756.0 263.7 L758.0 264.9 L759.0 264.2 L760.0 265.7 L762.0 263.2 L763.5 266.3 L764.5 265.7 L766.0 267.4 L767.5 267.9 L769.5 266.7 L770.5 268.0 L771.5 266.9 L772.5 268.7 L774.5 268.2 L776.5 267.0 L778.0 269.0 L779.0 267.7 L780.0 271.9 L781.0 270.1 L782.0 269.5 L784.0 272.8 L785.0 272.1 L787.0 272.3 L788.5 269.9 L789.5 271.3 L791.5 274.8 L793.0 272.7 L794.0 272.7 L795.0 273.6 L796.5 274.5 L797.5 272.3 L799.0 274.9 L800.0 273.7 L801.5 275.8 L802.5 274.5 L804.0 274.5 L806.0 275.0 L807.0 276.3 L808.0 276.0 L809.0 277.5 L810.0 277.0 L811.0 278.9 L812.0 277.0 L813.5 279.0 L814.5 276.5 L816.5 278.5 L817.5 277.7 L818.5 279.7 L820.5 278.3 L821.5 279.1 L823.5 279.8 L825.5 281.9 L826.5 282.1 L828.0 280.3 L830.0 280.9 L831.0 280.7 L832.5 283.2 L833.5 281.8 L834.5 283.8 L836.0 281.9 L837.0 283.6 L839.0 281.0 L840.5 283.1 L841.5 282.2 L843.0 278.6 L844.0 280.4 L845.0 278.2 L847.0 280.4 L849.0 275.7 L851.0 276.2 L852.0 274.0 L853.0 273.9 L854.0 275.5 L855.0 273.4 L857.0 271.0 L858.0 271.9 L859.5 271.7 L860.5 270.3 L862.5 269.8 L864.5 267.6 L865.5 266.6 L866.5 267.3 L868.5 264.9 L869.5 266.1 L871.5 262.4 L873.0 264.1 L874.5 260.7 L876.0 262.6 L878.0 259.4 L879.5 260.6 L881.5 257.2 L883.5 256.2 L884.5 257.9 L885.5 254.3 L886.5 256.2 L888.0 252.1 L889.0 254.6 L890.5 254.0 L892.0 253.1 L893.5 250.5 L895.0 252.1 L897.0 250.3 L899.0 250.0 L900.0 252.3 L902.0 252.2 L903.5 251.3 L905.5 253.2 L906.5 254.3 L907.5 253.7 L909.5 254.8 L910.5 254.6 L912.0 255.8 L913.0 254.9 L915.0 257.3 L916.0 254.7 L917.0 254.9 L918.0 255.6 L919.5 256.2 L920.5 256.1 L922.5 256.6 L923.5 258.9 L924.5 257.7 L926.5 257.6 L928.5 260.5 L930.0 257.1 L931.0 257.3 L932.5 260.1 L934.5 258.5 L935.5 260.0 L937.0 262.6 L938.0 259.2 L939.5 262.2 L941.0 263.3 L942.0 262.8 L943.5 263.0 L944.5 262.3 L945.5 262.9 L947.5 263.6 L949.5 264.5 L950.5 265.3 L951.5 261.7 L952.5 262.3 L953.5 262.1 L955.0 262.6 L956.0 265.2 L957.0 266.9 L958.0 264.2 L959.0 266.9 L960.5 265.4 L962.0 265.7 L963.0 264.8 L964.0 265.1 L965.5 265.8 L967.0 268.6 L969.0 268.6 L970.5 268.0 L971.5 268.0 L972.5 270.3 L974.0 268.3 L976.0 271.5 L977.0 268.5 L978.0 270.0 L979.0 274.1 L981.0 273.8 L983.0 273.1 L984.0 270.4 L985.5 272.6 L987.0 273.3 L988.5 272.9 L990.5 272.6 L991.5 271.7 L993.0 273.5 L994.5 273.2 L996.5 275.6 L997.5 273.8 L998.5 273.6 L999.5 274.0 L1001.5 275.7 L1003.5 277.1 L1005.5 275.5 L1006.5 277.8 L1007.5 276.0 L1009.5 276.5 L1010.5 278.6 L1011.5 277.4 L1013.0 278.8 L1014.0 278.1 L1016.0 277.4" fill="none" stroke="#40e23e" stroke-width="1.2" stroke-linejoin="miter" stroke-miterlimit="3"/>
<path d="M511 35.5h10l-5 9.5z" fill="#ff9c12" stroke="#f2c030" stroke-width="0.7"/>
<path d="M996 138.5l7.5-4.5v9z" fill="#f2f04e"/><rect x="1003" y="137.5" width="13" height="1.2" fill="#f2f04e"/>
<g style="font-family:'Liberation Sans',sans-serif;font-size:13px" text-anchor="middle">
<circle cx="10.5" cy="387.5" r="8.5" fill="#f4f030" stroke="#e8e0a0" stroke-width="1"/><path d="M19 386.5h5v-4l6.5 5-6.5 5v-4h-5z" fill="#f4f030"/><text x="10.5" y="392" fill="#111">1</text>
<circle cx="10.5" cy="435.5" r="8.5" fill="#30dcf0" stroke="#b0e8f0" stroke-width="1"/><path d="M19 434.5h5v-4l6.5 5-6.5 5v-4h-5z" fill="#30dcf0"/><text x="10.5" y="440" fill="#111">2</text>
<circle cx="10.5" cy="484.5" r="8.5" fill="#e22ee2" stroke="#e8a0e8" stroke-width="1"/><path d="M19 483.5h5v-4l6.5 5-6.5 5v-4h-5z" fill="#e22ee2"/><text x="10.5" y="489" fill="#111">3</text>
<circle cx="10.5" cy="533.5" r="8.5" fill="#22e222" stroke="#e8a030" stroke-width="1"/><path d="M19 532.5h5v-4l6.5 5-6.5 5v-4h-5z" fill="#22e222"/><text x="10.5" y="538" fill="#111">4</text>
</g>
</svg>

<div class="a" style="left:16px;top:539px;width:1004px;height:2px;background:linear-gradient(#6a72a0,#3a4270)"></div>
<div class="a panel"></div>
<!-- channel box -->
<div class="box" style="left:21px;top:544px;width:281px;height:93px"></div>
<div class="pill p1" style="left:30px;top:552px">C1</div><div class="t" style="left:67px;top:550px">3.0A/div</div><div class="t" style="left:183px;top:550px">1MΩ</div><div class="bw" style="top:550px"><span class="a" style="left:3px;top:-3px;font-size:9px;font-weight:bold">B</span><span class="a" style="left:7px;top:5px;font-size:10px;font-weight:bold;line-height:12px">W</span><span class="a" style="left:17px;top:1px;letter-spacing:0.3px">:120M</span></div>
<div class="pill p2" style="left:30px;top:573px">C2</div><div class="t" style="left:67px;top:571px">3.0A/div</div><div class="t" style="left:183px;top:571px">1MΩ</div><div class="bw" style="top:571px"><span class="a" style="left:3px;top:-3px;font-size:9px;font-weight:bold">B</span><span class="a" style="left:7px;top:5px;font-size:10px;font-weight:bold;line-height:12px">W</span><span class="a" style="left:17px;top:1px;letter-spacing:0.3px">:120M</span></div>
<div class="pill p3" style="left:30px;top:594px">C3</div><div class="t" style="left:67px;top:592px">3.0A/div</div><div class="t" style="left:183px;top:592px">1MΩ</div><div class="bw" style="top:592px"><span class="a" style="left:3px;top:-3px;font-size:9px;font-weight:bold">B</span><span class="a" style="left:7px;top:5px;font-size:10px;font-weight:bold;line-height:12px">W</span><span class="a" style="left:17px;top:1px;letter-spacing:0.3px">:120M</span></div>
<div class="pill p4" style="left:30px;top:615px">C4</div><div class="t" style="left:67px;top:613px">3.0A/div</div><div class="t" style="left:183px;top:613px">1MΩ</div><div class="bw" style="top:613px"><span class="a" style="left:3px;top:-3px;font-size:9px;font-weight:bold">B</span><span class="a" style="left:7px;top:5px;font-size:10px;font-weight:bold;line-height:12px">W</span><span class="a" style="left:17px;top:1px;letter-spacing:0.3px">:120M</span></div>

<!-- trigger box -->
<div class="box" style="left:591px;top:544px;width:186px;height:37px"></div>

<div class="a" style="left:597px;top:551px;width:16px;height:15px;background:linear-gradient(135deg,#f4dcc8,#dcd4ea);border:1px solid #e0a868;color:#111;font-size:11px;font-weight:normal;line-height:14px;text-align:center;letter-spacing:0.5px">A'</div>
<div class="pill p1" style="left:615px;top:552px;font-size:10px">C1</div>
<svg class="a" style="left:649px;top:550px" width="16" height="15"><path d="M2 13.5h3.5l5-11h4" fill="none" stroke="#fff" stroke-width="1.8"/></svg>
<div class="t" style="left:668px;top:550px">14.9A</div>
<div class="t" style="left:599px;top:567px">Ready</div>
<div class="t" style="left:729px;top:567px">Auto</div>
<!-- acq box -->
<div class="box" style="left:781px;top:544px;width:231px;height:93px"></div>

<div class="t" style="left:789px;top:550px">1.0µs/div</div>
<div class="t" style="left:854px;top:550px">100MS/s</div>
<div class="t" style="left:940px;top:550px">10.0ns/pt</div>
<div class="t" style="left:789px;top:571px;color:#30e030">Run</div>
<div class="t" style="left:876px;top:571px">Sample</div>
<svg class="a" style="left:990px;top:572px" width="10" height="17"><rect x="2.5" y="0" width="4" height="12" rx="1" fill="#f0f040"/><circle cx="4.5" cy="12.8" r="3.4" fill="#f0f040"/></svg>
<div class="t" style="left:789px;top:592px">505 acqs</div>
<div class="t" style="left:929px;top:592px">RL:1.0k</div>
<div class="t" style="left:789px;top:613px">Auto</div>
<div class="t" style="left:831px;top:613px">April 01, 2020</div>
<div class="t" style="left:956px;top:613px;color:#e89e38">13:08:20</div>
<!-- measurement box -->
<div class="box" style="left:21px;top:646px;width:566px;height:106px"></div>

<div class="a" style="left:198px;top:673px;width:79px;height:75px;background:#262626"></div>
<div class="a" style="left:348px;top:673px;width:69px;height:75px;background:#262626"></div>
<div class="a" style="left:127px;top:672px;width:1px;height:77px;background:#d8d8d8"></div>
<div class="a" style="left:197px;top:672px;width:1px;height:77px;background:#d8d8d8"></div>
<div class="a" style="left:277px;top:672px;width:1px;height:77px;background:#d8d8d8"></div>
<div class="a" style="left:347px;top:672px;width:1px;height:77px;background:#d8d8d8"></div>
<div class="a" style="left:417px;top:672px;width:1px;height:77px;background:#d8d8d8"></div>
<div class="a" style="left:487px;top:672px;width:1px;height:77px;background:#d8d8d8"></div>
<div class="a" style="left:547px;top:672px;width:1px;height:77px;background:#d8d8d8"></div>
<div class="a" style="left:583px;top:672px;width:1px;height:77px;background:#d8d8d8"></div>
<div class="a" style="left:127px;top:672px;width:457px;height:1px;background:#d8d8d8"></div>
<div class="a" style="left:127px;top:691px;width:457px;height:1px;background:#d8d8d8"></div>
<div class="a" style="left:127px;top:710px;width:457px;height:1px;background:#d8d8d8"></div>
<div class="a" style="left:127px;top:729px;width:457px;height:1px;background:#d8d8d8"></div>
<div class="a" style="left:127px;top:748px;width:457px;height:1px;background:#d8d8d8"></div>
<div class="t" style="left:127px;top:654px;width:70px;text-align:center">Value</div>
<div class="t" style="left:197px;top:654px;width:80px;text-align:center">Mean</div>
<div class="t" style="left:277px;top:654px;width:70px;text-align:center">Min</div>
<div class="t" style="left:347px;top:654px;width:70px;text-align:center">Max</div>
<div class="t" style="left:417px;top:654px;width:70px;text-align:center">St Dev</div>
<div class="t" style="left:487px;top:654px;width:60px;text-align:center">Count</div>
<div class="t" style="left:547px;top:654px;width:36px;text-align:center">Info</div>
<div class="pill p1" style="left:29px;top:674px">C1</div>
<div class="t" style="left:69px;top:674px">RMS</div>
<div class="t" style="left:129px;top:674px">15.04A</div>
<div class="t" style="left:199px;top:674px">15.027015</div>
<div class="t" style="left:279px;top:674px">14.98</div>
<div class="t" style="left:349px;top:674px">15.07</div>
<div class="t" style="left:419px;top:674px">16.7m</div>
<div class="t" style="left:489px;top:674px">506.0</div>
<div class="pill p2" style="left:29px;top:693px">C2</div>
<div class="t" style="left:69px;top:693px">RMS</div>
<div class="t" style="left:129px;top:693px">16.41A</div>
<div class="t" style="left:199px;top:693px">16.411926</div>
<div class="t" style="left:279px;top:693px">16.36</div>
<div class="t" style="left:349px;top:693px">16.45</div>
<div class="t" style="left:419px;top:693px">13.13m</div>
<div class="t" style="left:489px;top:693px">506.0</div>
<div class="pill p3" style="left:29px;top:712px">C3</div>
<div class="t" style="left:69px;top:712px">RMS</div>
<div class="t" style="left:129px;top:712px">17.85A</div>
<div class="t" style="left:199px;top:712px">17.861973</div>
<div class="t" style="left:279px;top:712px">17.83</div>
<div class="t" style="left:349px;top:712px">17.93</div>
<div class="t" style="left:419px;top:712px">13.91m</div>
<div class="t" style="left:489px;top:712px">506.0</div>
<div class="pill p4" style="left:29px;top:731px">C4</div>
<div class="t" style="left:69px;top:731px">RMS*</div>
<div class="t" style="left:129px;top:731px">15.95A</div>
<div class="t" style="left:199px;top:731px">15.923305</div>
<div class="t" style="left:279px;top:731px">15.87</div>
<div class="t" style="left:349px;top:731px">15.97</div>
<div class="t" style="left:419px;top:731px">17.7m</div>
<div class="t" style="left:489px;top:731px">506.0</div>
</body></html>
